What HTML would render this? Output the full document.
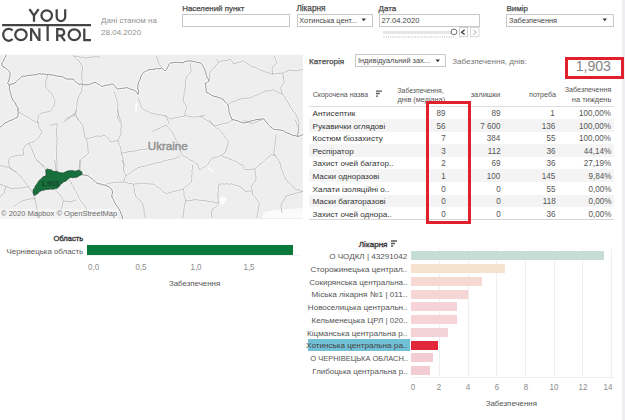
<!DOCTYPE html><html><head><meta charset="utf-8"><style>
html,body{margin:0;padding:0;background:#fff;width:625px;height:420px;overflow:hidden;}
body{position:relative;font-family:"Liberation Sans",sans-serif;}
.t{position:absolute;white-space:nowrap;}
.r{position:absolute;}
svg{position:absolute;}
</style></head><body>
<div class="r" style="left:622.00px;top:0.00px;width:3.00px;height:420.00px;background:#eeeef3;"></div>
<svg style="left:0;top:0" width="100" height="50" viewBox="0 0 100 50">
<g fill="none" stroke="#444446" stroke-width="2.25" stroke-linecap="butt" stroke-linejoin="miter">
<path d="M29.4 9.1 L34 15.6 L38.6 9.1 M34 15.6 V21.7" stroke-linejoin="bevel"/>
<circle cx="46.7" cy="15.5" r="5.25"/>
<path d="M56.7 9.3 V16.8 A4.25 4.25 0 0 0 65.2 16.8 V9.3"/>
<path d="M2.1 25 H91"/>
<path d="M12.6 30.6 A5.5 6 0 1 0 12.6 39"/>
<ellipse cx="20.95" cy="34.7" rx="5.7" ry="5.4"/>
</g><g fill="#444446"><rect x="30" y="28.3" width="2.2" height="12.7"/><rect x="38.3" y="28.3" width="2.2" height="12.7"/><path d="M30 28.3 H32.5 L40.5 41 H38Z"/></g><g fill="none" stroke="#444446" stroke-width="2.25">
<path d="M47.65 25 V41"/>
<path d="M57.2 41 V29.2 H61 A3.2 3.2 0 0 1 61 35.6 H57.2 M60.6 35.6 L65 41"/>
<ellipse cx="74.3" cy="34.7" rx="5.7" ry="5.4"/>
<path d="M84.3 28.5 V40.05 H91"/>
</g></svg>
<div class="t" style="top:17.00px;font-size:8px;line-height:8px;color:#8f8f8f;left:101.10px;">Дані станом на</div>
<div class="t" style="top:29.00px;font-size:8px;line-height:8px;color:#8f8f8f;left:101.10px;">28.04.2020</div>
<div class="t" style="top:5.00px;font-size:7.9px;line-height:7.9px;color:#4a4a4a;left:182.20px;-webkit-text-stroke:0.25px #4a4a4a;">Населений пункт</div>
<div class="r" style="left:182.00px;top:14.00px;width:108.00px;height:12.60px;background:#fff;border:1px solid #c8c8c8;box-sizing:border-box;"></div>
<div class="t" style="top:5.00px;font-size:8.2px;line-height:8.2px;color:#4a4a4a;left:296.40px;-webkit-text-stroke:0.25px #4a4a4a;">Лікарня</div>
<div class="r" style="left:297.00px;top:14.00px;width:76.00px;height:12.60px;background:#fff;border:1px solid #c8c8c8;box-sizing:border-box;"></div>
<div class="t" style="top:17.00px;font-size:7.3px;line-height:7.3px;color:#444;left:299.30px;">Хотинська цент...</div>
<svg style="left:361px;top:18px" width="6" height="4"><path d="M0.5 0.5 H5 L2.75 3.2Z" fill="#333"/></svg>
<div class="t" style="top:5.00px;font-size:8px;line-height:8px;color:#4a4a4a;left:378.60px;-webkit-text-stroke:0.25px #4a4a4a;">Дата</div>
<div class="r" style="left:379.00px;top:14.00px;width:101.00px;height:12.60px;background:#fff;border:1px solid #c8c8c8;box-sizing:border-box;"></div>
<div class="t" style="top:17.00px;font-size:7.6px;line-height:7.6px;color:#444;left:381.50px;">27.04.2020</div>
<div class="r" style="left:383.00px;top:30.50px;width:69.00px;height:3.50px;background:#e6e6e6;"></div>
<svg style="left:380px;top:35px" width="78" height="4"><path d="M3.5 2 H75" stroke="#d6d6d6" stroke-width="2" stroke-dasharray="0.9 1.35"/></svg>
<svg style="left:449px;top:26px" width="31" height="12"><circle cx="5" cy="5.9" r="2.9" fill="#fff" stroke="#6a6a6a" stroke-width="0.95"/><rect x="10.6" y="1.5" width="8" height="9.2" fill="#fff" stroke="#c4c4c4" stroke-width="0.8"/><path d="M15.6 3.8 L12.6 6.2 L15.6 8.6" fill="none" stroke="#3a3a3a" stroke-width="1.3"/><rect x="21.4" y="1.5" width="8.6" height="9.2" fill="#fff" stroke="#d0d0d0" stroke-width="0.8"/><path d="M24.4 3.8 L27.2 6.2 L24.4 8.6" fill="none" stroke="#c0c0c0" stroke-width="1.1"/></svg>
<div class="t" style="top:5.00px;font-size:8px;line-height:8px;color:#4a4a4a;left:506.40px;-webkit-text-stroke:0.25px #4a4a4a;">Вимір</div>
<div class="r" style="left:506.00px;top:14.00px;width:108.00px;height:12.60px;background:#fff;border:1px solid #c8c8c8;box-sizing:border-box;"></div>
<div class="t" style="top:17.00px;font-size:7.4px;line-height:7.4px;color:#444;left:509.00px;">Забезпечення</div>
<svg style="left:602px;top:18px" width="6" height="4"><path d="M0.5 0.5 H5 L2.75 3.2Z" fill="#333"/></svg>
<svg style="left:0;top:0" width="304" height="220" viewBox="0 0 304 220"><defs><clipPath id="mc"><rect x="0" y="54.7" width="303" height="164.3"/></clipPath></defs><rect x="0" y="54.7" width="303" height="164.3" fill="#eeeeee"/><g clip-path="url(#mc)"><path d="M219 198 L224 196 L227 199 L224 204 L218 205Z" fill="#fbfbfb"/><path d="M264 212 L275 210 L290 209 L300 208 L303 209 L303 218 L262 218Z" fill="#fbfbfb"/><path d="M136 101 L137.5 104 L137 111 L135.5 112 L135 106Z" fill="#fbfbfb"/><path d="M207.5 168 L209.5 167.6 L213.5 171.5 L212.5 173 Z" fill="#fbfbfb"/><g fill="none" stroke-linejoin="round"><path d="M6.7 54.0 L6.0 55.7 L5.3 57.5 L4.1 58.9 L3.7 60.8 L2.5 62.3 L1.7 64.0 L2.5 66.5 L4.0 67.2 L5.5 67.8 L6.7 69.0 L8.3 70.7 L10.0 72.3 L10.2 74.0 L9.7 75.7 L9.8 77.4 L9.2 79.0 L8.7 81.1 L7.5 83.0 L9.2 85.0 L9.5 86.8 L9.3 88.7 L10.1 90.4 L10.0 92.3 L10.9 93.9 L11.2 95.7 L11.6 97.5 L12.6 99.0 L13.3 100.7 L14.6 102.3 L15.8 104.0 L16.2 105.9 L17.8 107.2 L18.3 109.0 L17.8 110.6 L18.2 112.3 L18.1 114.0 L18.0 115.7 L17.5 117.3 L16.1 118.1 L14.4 118.4 L13.1 119.6 L11.5 120.0 L10.0 120.7 L8.3 121.4 L6.7 122.3 L5.0 123.0 L3.7 124.0 L2.7 125.3 L1.5 126.3 L0.0 127.0" stroke="#ffffff" stroke-opacity="0.75" stroke-width="2.8"/><path d="M9.2 85.0 L11.0 84.1 L13.1 83.8 L15.0 83.0 L16.3 81.7 L17.6 80.3 L19.1 79.2 L20.3 77.8 L21.7 76.5 L23.3 76.1 L25.1 76.3 L26.7 75.9 L28.3 75.3 L30.0 75.4 L31.6 75.1 L33.3 74.8 L35.0 74.9 L36.7 74.5 L38.3 73.8 L40.0 73.7 L41.6 74.3 L43.4 73.7 L45.0 74.2 L46.6 74.7 L48.4 74.3 L50.0 74.8 L51.7 75.0 L53.4 74.9 L55.0 75.7 L56.7 76.0 L58.3 76.1 L60.0 76.6 L61.7 76.5 L63.4 77.2 L65.0 78.3 L66.7 79.0 L68.3 79.1 L70.0 79.1 L71.7 79.0 L73.3 79.0 L74.3 80.5 L75.5 81.8 L77.1 82.7 L78.3 84.0 L80.0 84.3 L81.7 83.9 L83.3 84.7 L85.0 84.8 L86.7 84.8 L88.5 84.8 L90.1 84.2 L91.6 83.3 L93.3 83.0 L95.0 82.2 L96.5 83.0 L97.7 84.1 L99.4 84.5 L100.6 85.7 L102.0 86.6 L103.7 85.9 L105.5 85.4 L107.2 84.9 L109.1 85.1 L110.8 84.1 L112.6 84.0 L114.1 85.1 L115.3 86.5 L116.3 88.1 L117.9 89.2 L119.6 88.5 L121.4 88.4 L123.2 88.2 L125.0 88.1 L126.7 87.4 L128.4 88.4 L130.1 89.1 L132.1 89.4 L133.8 90.2 L135.5 91.0 L136.9 92.7 L138.1 94.5 L138.4 92.8 L138.5 91.0 L137.8 89.2 L137.8 87.5 L137.9 85.8 L138.1 84.0 L138.5 82.4 L139.3 81.0 L140.1 79.5 L140.4 77.9 L140.8 76.3 L141.8 74.9 L142.5 73.4 L143.8 72.4 L145.2 71.6 L146.7 71.0 L147.8 69.8 L149.6 69.8 L151.3 69.4 L153.1 69.3 L154.9 69.1 L156.6 68.3 L158.4 68.9 L160.2 68.6 L161.9 68.1 L163.4 69.7 L165.4 70.7 L166.7 69.3 L167.4 67.5 L168.5 65.9 L169.3 64.2 L170.7 62.8 L172.5 62.9 L174.2 62.4 L176.0 62.4 L177.7 62.5 L179.5 62.5 L181.2 62.7 L183.0 62.8 L184.6 61.8 L186.4 61.2 L188.3 61.0 L190.1 60.9 L191.9 61.2 L193.6 61.6 L195.4 61.6 L197.0 62.6 L198.8 62.6 L200.6 62.8 L202.0 64.4 L203.1 66.2 L204.0 68.1 L204.7 69.6 L205.2 71.1 L205.9 72.6 L205.9 74.4 L206.7 75.8 L207.1 77.7 L208.4 79.2 L209.2 80.9 L207.8 81.7 L206.6 82.9 L205.0 83.4 L205.7 85.2 L205.8 87.1 L206.2 88.9 L206.1 90.9 L206.7 92.7 L208.5 93.3 L210.2 94.0 L211.5 95.5 L213.4 96.0 L215.1 96.6 L216.9 96.8 L218.4 97.7 L220.3 97.9 L221.8 98.9 L223.5 99.4 L224.2 100.9 L225.3 102.1 L226.5 103.3 L227.7 104.4 L228.3 106.0 L228.5 107.7 L229.0 109.4 L228.8 111.2 L229.4 112.8 L230.0 114.5 L230.4 116.2 L231.4 117.8 L231.9 119.5 L233.6 119.6 L235.3 120.4 L237.0 120.4 L238.5 121.4 L240.2 121.9 L241.9 122.5 L243.7 122.9 L245.4 122.8 L247.1 122.3 L248.7 121.4 L250.4 121.2 L252.1 120.9 L253.8 120.4 L255.4 119.8 L257.1 119.5 L258.8 119.4 L260.5 119.1 L262.2 119.2 L263.9 118.7 L264.7 120.4 L266.1 121.5 L267.2 122.9 L268.2 124.5 L269.5 125.9 L270.9 127.1 L272.6 128.1 L273.8 129.5 L275.7 129.5 L277.6 129.7 L279.5 129.9 L281.4 130.2 L283.3 130.7 L284.7 131.5 L286.0 132.5 L287.5 133.1 L289.1 133.6 L290.5 134.3 L292.2 135.0 L294.0 135.8 L295.9 135.7 L297.6 136.7 L299.5 136.0 L301.3 135.4 L303.0 134.3" stroke="#ffffff" stroke-opacity="0.75" stroke-width="2.8"/><path d="M81.4 174.3 L83.0 174.9 L84.6 175.2 L86.3 175.3 L87.9 175.7 L89.5 176.5 L90.6 178.1 L92.3 178.8 L93.6 180.0 L94.9 181.4 L96.2 182.7 L97.9 183.6 L99.7 183.9 L101.5 184.2 L103.1 185.0 L105.0 185.0 L107.1 186.2 L109.3 187.1 L110.9 188.3 L112.1 190.0 L112.4 191.8 L112.4 193.6 L111.7 195.3 L112.1 197.1 L112.6 198.7 L113.8 199.9 L114.0 201.6 L115.0 202.9 L115.6 204.5 L116.8 205.8 L117.9 207.1 L118.7 208.5 L119.3 210.0 L120.3 211.3 L120.7 212.9 L121.8 214.9 L122.1 217.1 L123.0 220.0" stroke="#ffffff" stroke-opacity="0.75" stroke-width="2.8"/><path d="M48.3 74.8 L47.3 76.3 L46.9 78.1 L46.4 79.8 L45.8 81.5 L45.5 83.4 L45.9 85.4 L45.8 87.3 L46.8 88.8 L48.0 90.2 L49.5 91.2 L50.7 92.5 L51.7 94.0 L52.7 95.6 L53.5 97.3 L54.1 99.1 L55.0 100.7 L54.8 102.4 L54.2 104.0 L54.0 105.7 L53.3 107.3 L51.9 108.5 L51.2 110.2 L50.0 111.5 L48.3 111.8 L46.7 112.0 L45.0 112.1 L43.4 112.8 L41.7 113.0 L39.8 114.1 L38.3 115.7 L38.1 117.5 L37.9 119.3 L37.7 121.2 L37.5 123.0" stroke="#ffffff" stroke-opacity="0.7" stroke-width="2"/><path d="M16.7 109.0 L18.1 110.1 L18.9 111.6 L20.0 113.0 L21.8 113.7 L23.5 114.4 L24.9 115.8 L26.7 116.5 L28.5 117.3 L30.0 118.6 L31.6 119.8 L33.3 120.7 L34.9 121.5 L36.7 122.1 L38.3 123.0" stroke="#ffffff" stroke-opacity="0.7" stroke-width="2"/><path d="M73.3 55.7 L74.6 57.0 L75.9 58.4 L77.2 59.8 L78.9 60.8 L80.0 62.3 L80.8 64.0 L81.8 65.5 L82.5 67.3 L82.5 69.0 L82.0 70.6 L82.0 72.3 L81.8 74.0 L81.7 75.7 L81.7 77.4 L81.7 79.1 L82.2 80.7 L82.3 82.3 L82.5 84.0 L82.3 85.7 L82.1 87.3 L81.7 89.0 L81.7 90.7 L80.9 92.4 L80.0 94.0 L79.2 95.7 L78.3 97.3 L77.7 98.9 L77.6 100.6 L77.2 102.3 L76.9 103.9 L77.2 105.7 L76.7 107.3 L76.4 109.0 L75.9 110.6 L75.8 112.3 L75.8 114.0 L74.5 115.1 L73.0 115.9 L71.5 116.5 L70.0 117.3 L68.9 118.6 L67.4 119.5 L66.2 120.6 L64.6 121.2 L63.3 122.3" stroke="#ffffff" stroke-opacity="0.7" stroke-width="2"/><path d="M75.8 114.0 L76.2 115.8 L76.8 117.5 L77.9 118.9 L78.3 120.7" stroke="#ffffff" stroke-opacity="0.7" stroke-width="2"/><path d="M73.3 55.7 L74.9 56.2 L76.6 56.4 L78.4 56.3 L79.9 57.2 L81.6 57.5 L83.4 57.2 L85.0 58.1 L86.7 58.0 L88.3 57.5 L90.0 57.2 L91.7 57.3 L93.3 56.5 L94.9 57.0 L96.7 56.6 L98.3 57.0 L100.0 57.3" stroke="#ffffff" stroke-opacity="0.7" stroke-width="2"/><path d="M156.6 55.8 L157.0 57.6 L157.6 59.3 L158.2 61.0 L158.4 62.8 L159.7 64.5 L160.6 66.4 L161.9 68.1" stroke="#ffffff" stroke-opacity="0.7" stroke-width="2"/><path d="M190.0 62.8 L190.6 64.5 L190.4 66.3 L190.6 68.1 L191.2 69.8 L191.0 71.6 L190.0 73.0 L188.7 74.2 L187.6 75.6 L186.5 76.9 L186.6 78.7 L185.6 80.4 L185.5 82.1 L185.2 83.9 L185.6 85.7 L185.2 87.5 L184.8 89.2 L184.9 91.0 L184.0 92.7 L184.1 94.5 L183.9 96.3 L183.4 98.0 L183.0 99.8 L183.6 101.7 L184.5 103.4 L185.8 105.0 L186.5 106.8 L186.4 108.6 L185.5 110.3 L185.4 112.1 L185.0 113.8 L184.8 115.6 L183.3 116.3 L181.8 116.7 L180.1 116.6 L178.5 117.2 L177.0 117.9 L175.3 117.6 L173.8 118.2 L172.2 118.5 L170.7 119.1 L168.7 118.2 L167.3 116.5 L165.4 115.6 L163.6 115.7 L161.9 114.8 L160.1 114.9 L158.4 114.8 L156.6 114.3 L154.9 113.8 L153.1 113.9 L151.5 113.3 L149.9 112.7 L148.6 111.6 L146.9 111.1 L145.4 110.4 L143.9 109.6 L142.5 108.6 L141.5 107.2 L141.0 105.7 L140.5 104.1 L139.8 102.6 L139.5 100.9 L138.6 99.6 L138.1 98.0" stroke="#ffffff" stroke-opacity="0.7" stroke-width="2"/><path d="M184.8 115.6 L186.6 116.0 L188.4 116.1 L190.1 116.6 L191.9 116.7 L193.6 117.4 L195.2 116.9 L196.8 116.5 L198.5 116.8 L200.1 116.4 L201.7 115.9 L203.4 115.8 L205.0 115.6" stroke="#ffffff" stroke-opacity="0.7" stroke-width="2"/><path d="M114.4 91.9 L114.6 93.6 L115.7 95.1 L115.7 96.9 L116.5 98.4 L116.9 100.0 L117.1 101.7 L117.9 103.3 L118.0 105.1 L117.9 106.8 L117.7 108.6 L117.5 110.3 L117.9 112.1 L118.6 113.8 L118.8 115.7 L119.5 117.5 L120.1 119.2 L120.9 120.9 L121.4 122.7" stroke="#ffffff" stroke-opacity="0.7" stroke-width="2"/><path d="M165.4 115.6 L166.2 117.2 L167.2 118.8 L167.8 120.5 L168.6 122.2 L169.0 124.0" stroke="#ffffff" stroke-opacity="0.7" stroke-width="2"/><path d="M216.8 59.0 L217.5 60.8 L218.5 62.4 L220.1 61.7 L221.8 61.2 L223.5 60.6 L225.3 60.7 L227.0 60.3 L228.7 59.6 L230.3 59.0 L231.5 60.6 L232.7 62.2 L233.6 64.0 L235.2 63.3 L237.0 62.9 L238.6 62.1 L240.3 61.8 L242.0 61.1 L243.7 60.7 L244.8 62.0 L246.2 63.0 L247.7 63.8 L249.2 64.6 L250.4 65.8 L251.8 66.8 L253.5 66.9 L254.9 67.6 L256.6 68.0 L257.9 68.9 L259.4 69.6 L260.9 70.3 L262.5 70.7 L263.9 71.6 L265.6 72.1 L267.4 72.3 L269.0 73.0 L270.7 73.4 L272.3 74.2 L274.0 74.0 L275.6 73.5 L277.3 73.4 L279.0 73.4 L280.7 73.2 L282.4 73.3 L284.1 72.5 L285.7 71.7 L287.4 71.0 L289.0 70.0 L290.7 70.3 L292.4 70.5 L294.1 70.8 L295.8 70.6 L297.5 70.8 L299.3 70.1 L301.3 70.0 L303.0 69.1" stroke="#ffffff" stroke-opacity="0.7" stroke-width="2"/><path d="M218.5 62.4 L217.7 63.8 L216.2 64.8 L215.2 66.1 L214.5 67.7 L213.0 68.5 L211.9 69.8 L211.0 71.2 L210.0 72.5 L209.7 74.2 L209.4 75.8 L209.8 77.6 L209.3 79.2 L209.2 80.9" stroke="#ffffff" stroke-opacity="0.7" stroke-width="2"/><path d="M274.0 55.7 L274.8 57.4 L275.4 59.2 L276.3 60.8 L277.3 62.4 L275.9 63.5 L274.8 64.9 L273.3 65.9 L272.3 67.4 L272.2 69.1 L272.1 70.8 L272.5 72.5 L272.3 74.2" stroke="#ffffff" stroke-opacity="0.7" stroke-width="2"/><path d="M282.4 73.3 L283.1 75.1 L283.3 77.0 L283.5 78.9 L284.0 80.7 L284.0 82.6 L282.7 84.1 L281.8 85.9 L280.7 87.6 L281.0 89.3 L281.5 91.0 L281.8 92.7 L282.4 94.3 L283.4 95.6 L284.7 96.7 L285.2 98.5 L286.2 99.8 L287.4 101.0 L288.2 102.7 L289.1 104.4 L289.8 106.2 L290.8 107.8 L292.1 108.9 L292.6 110.6 L294.0 111.7 L295.1 113.0 L295.8 114.5 L296.7 116.1 L297.0 117.9 L298.1 119.5 L298.3 121.3 L299.2 122.9 L298.6 124.6 L298.8 126.4 L298.7 128.1 L298.4 129.8 L298.1 131.5 L297.8 133.2 L297.7 135.0 L297.6 136.7" stroke="#ffffff" stroke-opacity="0.7" stroke-width="2"/><path d="M227.7 104.4 L229.3 103.8 L230.7 102.7 L232.3 102.0 L233.9 101.4 L235.6 101.0 L237.1 100.0 L238.7 99.4 L240.4 99.2 L242.0 98.5 L243.7 98.3 L245.4 98.2 L247.1 98.3 L248.8 98.1 L250.4 97.7 L252.1 97.2 L253.7 96.2 L255.4 95.7 L257.1 95.0 L258.8 94.3 L260.5 93.5 L262.0 92.4 L264.0 92.1 L265.5 91.0 L267.2 90.6 L268.9 91.0 L270.6 90.8 L272.3 89.9 L274.0 90.1 L275.7 90.9 L277.2 92.0 L278.9 93.0 L280.7 93.4 L282.4 94.3" stroke="#ffffff" stroke-opacity="0.7" stroke-width="2"/><path d="M200.0 116.2 L201.5 116.9 L202.9 117.7 L204.0 119.0 L205.7 119.3 L207.0 120.4 L208.4 121.2 L210.1 122.2 L211.3 123.6 L212.6 125.1 L214.3 126.0" stroke="#ffffff" stroke-opacity="0.7" stroke-width="2"/><path d="M37.9 122.1 L38.5 124.2 L38.6 126.4 L39.3 128.0 L40.3 129.3 L41.0 130.8 L42.1 132.1 L41.1 133.5 L40.5 135.1 L39.2 136.3 L38.6 137.9 L37.2 139.0 L36.0 140.3 L34.6 141.4 L32.9 142.1 L31.2 142.6 L29.6 143.1 L27.9 143.6 L26.5 144.8 L25.0 145.7 L24.2 147.6 L22.9 149.3 L23.3 151.2 L23.5 153.1 L23.6 155.0 L21.9 154.9 L20.4 155.7 L18.7 155.3 L17.1 155.7 L15.2 155.7 L13.3 156.5 L11.4 156.4 L10.2 157.6 L9.4 159.2 L8.6 160.7 L8.5 162.6 L9.2 164.5 L9.3 166.4 L10.4 167.8 L11.4 169.3 L12.9 170.1 L14.1 171.4 L15.7 172.0" stroke="#ffffff" stroke-opacity="0.7" stroke-width="2"/><path d="M27.9 143.6 L30.0 145.0 L30.7 146.8 L31.6 148.5 L32.2 150.3 L32.9 152.1 L33.8 154.0 L34.6 155.8 L35.0 157.9 L36.4 159.1 L37.2 160.9 L38.6 162.1 L40.1 162.9 L41.3 164.3 L42.9 165.0 L44.4 166.3 L45.8 167.7 L47.1 169.3" stroke="#ffffff" stroke-opacity="0.7" stroke-width="2"/><path d="M0.0 165.7 L1.7 166.0 L3.5 166.0 L5.2 166.4 L6.8 167.2 L8.6 167.1 L9.9 168.2 L11.3 169.0 L12.8 169.8 L14.1 170.8 L15.7 171.4 L16.6 172.8 L18.0 173.7 L19.0 174.9 L20.5 175.7 L21.4 177.1 L22.3 178.7 L23.6 180.0 L24.5 181.6 L25.7 182.9 L26.6 184.4 L27.8 185.6 L28.6 187.1 L30.0 188.3 L30.5 190.2 L32.1 191.3 L32.9 192.9" stroke="#ffffff" stroke-opacity="0.7" stroke-width="2"/><path d="M0.0 184.3 L1.9 185.0 L3.8 185.6 L5.7 186.4 L7.7 187.0 L9.4 188.0 L11.4 188.6 L13.1 188.9 L14.7 188.2 L16.4 188.4 L18.1 188.0 L19.7 188.1 L21.4 187.9 L23.2 187.6 L25.0 187.2 L26.8 187.0 L28.6 187.1" stroke="#ffffff" stroke-opacity="0.7" stroke-width="2"/><path d="M5.7 186.4 L5.6 188.1 L4.7 189.6 L4.7 191.3 L4.3 192.9 L3.0 194.4 L1.2 195.4 L0.0 197.0" stroke="#ffffff" stroke-opacity="0.7" stroke-width="2"/><path d="M14.3 205.7 L15.9 205.2 L17.1 203.9 L18.4 202.9 L19.9 202.0 L21.4 201.4 L23.1 200.6 L25.0 200.2 L26.7 199.5 L28.6 199.3 L30.4 198.9 L32.1 198.8 L33.9 198.8 L35.7 198.6" stroke="#ffffff" stroke-opacity="0.7" stroke-width="2"/><path d="M33.6 194.3 L33.7 196.1 L34.2 197.8 L34.9 199.4 L35.3 201.2 L35.7 202.9 L36.1 204.8 L36.7 206.7 L37.1 208.6 L37.3 210.5 L37.6 212.3 L37.5 214.2 L37.0 216.1 L37.5 218.0" stroke="#ffffff" stroke-opacity="0.7" stroke-width="2"/><path d="M37.1 160.0 L38.7 161.2 L40.0 162.9 L41.4 164.3 L42.3 165.8 L43.1 167.3 L44.3 168.6 L46.1 170.0" stroke="#ffffff" stroke-opacity="0.7" stroke-width="2"/><path d="M54.3 160.0 L54.9 161.7 L55.2 163.5 L55.5 165.3 L55.7 167.1 L55.9 168.7 L55.9 170.4 L56.0 172.0" stroke="#ffffff" stroke-opacity="0.7" stroke-width="2"/><path d="M50.0 125.0 L51.8 125.0 L53.6 124.6 L55.4 124.2 L57.1 123.6 L57.2 125.5 L57.0 127.4 L56.4 129.3 L56.3 131.1 L56.3 132.9 L56.7 134.7 L56.7 136.5 L57.2 138.2 L57.0 140.0 L56.7 141.8 L57.1 143.6 L56.7 145.2 L56.6 146.8 L56.4 148.5 L56.9 150.1 L56.9 151.8 L56.8 153.4 L56.4 155.0 L56.6 156.8 L56.6 158.6 L56.6 160.4 L57.1 162.1 L56.9 163.8 L57.0 165.4 L57.1 167.1 L57.0 168.8 L57.4 170.4 L57.5 172.0" stroke="#ffffff" stroke-opacity="0.7" stroke-width="2"/><path d="M69.3 180.0 L70.1 181.4 L71.3 182.6 L71.7 184.4 L72.9 185.6 L73.6 187.1 L74.0 188.7 L74.9 190.1 L75.8 191.4 L76.4 192.9 L77.6 194.7 L78.5 196.6 L79.3 198.6 L80.3 200.1 L81.3 201.5 L82.8 202.7 L83.6 204.3 L84.8 205.5 L85.5 207.2 L86.4 208.6 L87.1 210.3 L88.0 212.0" stroke="#ffffff" stroke-opacity="0.7" stroke-width="2"/><path d="M55.0 190.0 L56.2 191.1 L57.4 192.1 L58.4 193.5 L59.8 194.3 L60.7 195.7 L61.8 197.5 L62.7 199.5 L63.6 201.4 L62.7 203.2 L62.5 205.2 L62.1 207.1 L61.4 208.7 L61.4 210.4 L61.0 212.0" stroke="#ffffff" stroke-opacity="0.7" stroke-width="2"/><path d="M63.6 201.4 L65.3 201.2 L67.0 201.2 L68.7 201.8 L70.4 201.6 L72.1 201.4 L74.2 200.6 L76.4 200.0" stroke="#ffffff" stroke-opacity="0.7" stroke-width="2"/><path d="M79.3 160.0 L79.8 161.6 L79.5 163.3 L79.5 165.0 L79.8 166.7 L80.1 168.3 L80.0 170.0" stroke="#ffffff" stroke-opacity="0.7" stroke-width="2"/><path d="M122.0 160.0 L122.6 161.5 L123.2 163.0 L124.4 164.2 L125.0 165.7" stroke="#ffffff" stroke-opacity="0.7" stroke-width="2"/><path d="M65.0 120.0 L66.2 118.7 L67.8 118.0 L69.3 117.1 L70.8 116.3 L72.0 115.0 L73.6 114.3 L75.0 113.0 L76.1 111.6 L77.1 110.0" stroke="#ffffff" stroke-opacity="0.7" stroke-width="2"/><path d="M73.6 114.3 L75.0 115.7 L76.6 117.0 L77.9 118.6 L78.6 120.2 L80.1 121.4 L80.8 123.0 L82.1 124.3 L82.8 126.1 L83.3 128.0 L83.6 130.0 L83.7 131.8 L84.5 133.5 L84.3 135.4 L85.0 137.1 L85.7 138.5 L86.4 140.0 L87.0 141.7 L87.4 143.5 L87.6 145.3 L87.9 147.1 L88.0 149.0 L88.0 151.0 L88.6 152.9 L87.5 154.2 L86.2 155.1 L85.0 156.2 L83.6 157.1 L81.9 158.3 L80.7 160.0 L80.8 161.7 L80.6 163.4 L80.3 165.0 L79.9 166.7 L79.2 168.3 L79.3 170.0" stroke="#ffffff" stroke-opacity="0.7" stroke-width="2"/><path d="M86.4 138.6 L88.2 138.5 L89.9 137.9 L91.7 137.7 L93.4 137.2 L95.0 136.4 L96.7 136.1 L98.3 135.9 L100.0 136.4 L101.7 136.1 L103.3 135.4 L105.0 135.7 L106.7 137.3 L108.6 138.6 L109.7 140.3 L110.7 142.1 L112.5 141.7 L114.3 141.3 L116.0 140.8 L117.9 140.7" stroke="#ffffff" stroke-opacity="0.7" stroke-width="2"/><path d="M117.9 110.0 L118.3 111.7 L118.1 113.4 L118.0 115.2 L117.5 116.9 L117.9 118.6 L119.0 119.9 L119.3 121.6 L120.7 122.8 L121.4 124.3 L121.4 126.0 L120.9 127.6 L120.8 129.3 L121.0 131.0 L121.2 132.7 L120.7 134.3 L120.0 135.9 L119.4 137.5 L118.3 139.0 L117.9 140.7 L118.7 142.2 L119.1 143.8 L119.3 145.5 L120.5 146.9 L120.7 148.6 L121.1 150.4 L121.2 152.2 L121.5 154.0 L122.1 155.7 L122.8 157.4 L123.1 159.1 L123.3 160.8 L123.0 162.6 L123.6 164.3 L123.8 166.2 L123.4 168.1 L123.6 170.0 L123.9 171.6 L124.9 173.0 L125.6 174.4 L126.0 176.0 L124.9 177.8 L124.3 179.9 L123.6 181.9" stroke="#ffffff" stroke-opacity="0.7" stroke-width="2"/><path d="M121.2 153.3 L122.9 152.8 L124.6 152.8 L126.3 152.2 L128.0 151.8 L129.6 151.3 L131.4 151.5 L133.1 151.0 L134.7 151.1 L136.3 150.6 L137.9 150.5 L139.4 149.6 L141.0 149.5 L142.6 149.4 L144.3 149.5 L145.9 149.2 L147.4 148.6" stroke="#ffffff" stroke-opacity="0.7" stroke-width="2"/><path d="M152.1 131.9 L153.6 131.0 L155.2 130.1 L156.8 129.5 L158.5 128.7 L160.2 128.3 L161.5 126.9 L163.3 126.6 L164.9 125.8 L166.4 124.8 L167.2 126.3 L168.3 127.6 L169.4 128.9 L170.6 130.1 L171.7 131.5 L172.7 132.9 L173.6 134.3 L174.0 135.9 L175.2 137.2 L175.8 138.8 L176.0 140.5 L177.0 141.8 L177.8 143.3 L178.5 144.8 L178.7 146.5 L179.5 147.9 L179.7 149.6 L180.7 151.0 L181.2 152.7 L182.0 154.3 L183.1 155.7 L184.6 156.4 L186.1 157.1 L187.6 157.9 L188.8 159.0 L190.2 160.0 L191.7 160.6 L193.2 161.3 L194.6 162.3 L195.9 163.3 L197.4 164.0 L197.9 165.6 L198.4 167.1 L198.9 168.6 L199.8 170.0 L201.3 169.1 L202.6 167.8 L204.3 167.3 L205.5 166.0 L207.1 165.2" stroke="#ffffff" stroke-opacity="0.7" stroke-width="2"/><path d="M126.0 176.0 L127.4 175.1 L128.6 174.1 L130.1 173.4 L131.2 172.1 L132.5 171.2 L133.8 170.2 L135.1 169.2 L136.8 168.8 L137.9 167.6 L139.5 167.3 L141.0 166.7 L142.6 166.3 L144.3 166.4 L145.8 165.6 L147.3 165.0 L149.0 165.0 L150.6 164.5 L152.1 164.0 L153.8 164.0 L155.2 162.9 L156.9 162.8 L158.5 162.7 L160.1 162.3 L161.7 162.0 L163.1 160.9 L164.8 160.7 L166.4 160.5 L167.9 159.8 L169.5 159.5 L171.3 159.7 L172.8 159.0 L174.5 158.8 L176.0 158.1 L177.5 157.2 L179.3 156.8 L180.7 155.7" stroke="#ffffff" stroke-opacity="0.7" stroke-width="2"/><path d="M192.6 165.2 L192.5 166.9 L192.6 168.6 L192.0 170.2 L191.8 171.9 L192.3 173.6 L191.8 175.2 L191.7 176.9 L191.9 178.6 L191.6 180.2 L191.4 181.9 L190.2 183.3 L188.8 184.4 L187.4 185.6 L185.8 186.6 L184.4 187.7 L183.1 189.0 L181.6 189.6 L180.0 190.2 L178.4 190.3 L176.7 190.5 L175.2 191.2 L173.6 191.4 L171.8 192.1 L170.1 192.8 L168.1 193.0 L166.4 193.8 L165.1 192.7 L163.5 192.0 L162.2 190.9 L161.1 189.6 L159.8 188.5 L158.5 187.4 L156.9 186.7 L155.7 185.6 L154.5 184.3 L152.8 184.0 L151.1 184.0 L149.4 184.0 L147.7 183.8 L146.0 183.1 L144.3 183.4 L142.6 183.1 L140.7 183.3 L138.8 183.7 L136.9 183.9 L135.0 183.8 L133.1 184.3 L131.6 183.5 L129.9 183.6 L128.3 183.3 L126.8 182.5 L125.1 182.5 L123.6 181.9 L121.8 182.4 L120.0 181.9 L118.2 182.4 L116.4 182.2 L114.7 182.7 L112.8 182.5 L111.1 183.0 L109.3 183.1 L106.4 184.3" stroke="#ffffff" stroke-opacity="0.7" stroke-width="2"/><path d="M133.1 184.3 L133.7 185.9 L134.2 187.6 L134.1 189.4 L134.4 191.1 L134.5 192.9 L135.5 194.4 L135.5 196.2 L136.6 197.5 L137.9 198.5 L139.0 199.8 L140.4 200.7 L141.5 202.0 L142.6 203.3 L142.9 205.0 L143.0 206.8 L143.9 208.3 L144.0 210.1 L144.1 211.8 L144.3 213.6 L145.0 215.2 L145.0 218.0" stroke="#ffffff" stroke-opacity="0.7" stroke-width="2"/><path d="M183.1 189.0 L183.7 190.7 L184.1 192.4 L183.8 194.2 L184.1 195.9 L184.8 197.6 L185.5 199.2 L185.5 201.0 L184.9 202.5 L185.1 204.2 L184.4 205.7 L184.3 207.3 L183.9 208.8 L184.2 210.5 L183.4 212.0 L183.6 213.7 L183.1 215.2 L183.0 218.0" stroke="#ffffff" stroke-opacity="0.7" stroke-width="2"/><path d="M185.5 201.0 L187.4 200.7 L189.3 200.8 L191.2 200.5 L193.1 199.8 L195.0 199.8 L196.8 199.7 L198.5 200.1 L200.2 200.3 L201.9 200.4 L203.7 200.4 L205.4 200.6 L207.1 201.0 L208.8 201.5 L210.4 202.0 L212.3 201.6 L213.9 202.4 L215.6 202.8 L217.4 202.6 L219.0 203.3" stroke="#ffffff" stroke-opacity="0.7" stroke-width="2"/><path d="M209.5 120.0 L210.5 121.7 L212.1 122.8 L213.0 124.5 L214.3 126.0 L215.9 125.6 L217.5 125.3 L219.0 124.6 L220.6 124.3 L222.3 124.1 L223.8 123.5 L225.5 123.3 L227.0 122.8 L228.6 122.4 L230.1 121.6 L231.6 120.5 L233.3 120.0" stroke="#ffffff" stroke-opacity="0.7" stroke-width="2"/><path d="M242.9 120.0 L244.4 120.7 L246.1 121.2 L247.7 121.6 L249.2 122.6 L250.7 123.2 L252.4 123.6 L254.0 123.0 L255.5 122.2 L257.1 121.8 L258.6 120.9 L260.2 120.3 L261.9 120.0" stroke="#ffffff" stroke-opacity="0.7" stroke-width="2"/><path d="M295.2 120.0 L295.9 121.6 L296.7 123.1 L297.0 124.7 L297.6 126.3 L298.5 127.8 L298.8 129.5 L298.4 131.3 L298.5 133.2 L297.7 134.9 L297.6 136.7" stroke="#ffffff" stroke-opacity="0.7" stroke-width="2"/><path d="M214.3 126.0 L215.6 127.4 L217.1 128.4 L218.8 129.3 L220.0 130.7 L221.4 131.9 L222.5 133.2 L223.2 134.8 L224.7 135.8 L225.3 137.5 L226.2 138.9 L227.4 140.2 L228.6 141.4 L228.0 142.9 L228.0 144.7 L227.0 146.1 L227.0 147.8 L226.2 149.3 L226.2 151.0 L224.8 151.9 L224.0 153.5 L222.4 154.4 L221.4 155.7 L219.7 155.8 L218.3 156.8 L216.7 157.0 L215.0 157.1 L213.6 158.0 L211.9 158.1 L210.7 159.3 L210.1 161.0 L208.8 162.2 L208.3 163.9 L207.1 165.2" stroke="#ffffff" stroke-opacity="0.7" stroke-width="2"/><path d="M221.4 155.7 L222.9 156.3 L224.2 157.2 L225.9 157.3 L227.4 157.9 L228.8 158.7 L230.4 159.2 L232.0 159.6 L233.3 160.5 L235.0 161.1 L236.6 161.8 L237.9 163.2 L239.6 163.8 L241.2 164.7 L242.9 165.2 L243.9 166.7 L244.2 168.5 L245.2 170.0 L246.8 169.5 L248.4 169.6 L250.0 169.5 L251.6 169.1 L253.2 169.3 L254.8 168.8 L256.2 167.6 L257.6 166.5 L259.1 165.5 L260.0 163.8 L261.8 163.2 L263.0 161.8 L264.3 160.5 L265.7 159.2 L267.3 158.3 L268.4 156.8 L270.2 156.0 L271.4 154.5 L273.0 155.0 L274.6 155.2 L276.2 155.7" stroke="#ffffff" stroke-opacity="0.7" stroke-width="2"/><path d="M276.2 134.3 L275.7 136.2 L275.8 138.1 L275.7 140.0 L275.0 141.9 L275.0 143.8 L275.1 145.7 L274.3 147.6 L274.5 149.5 L273.9 151.4 L273.8 153.3 L274.4 155.0 L275.7 156.2 L276.6 157.7 L277.8 159.0 L278.6 160.5 L279.6 162.1 L280.2 163.9 L280.7 165.7 L281.0 167.6 L281.6 169.3 L282.4 171.0 L283.0 172.7 L283.4 174.5 L284.6 176.0 L285.2 177.7 L285.7 179.5 L286.8 180.8 L288.3 181.6 L289.5 182.8 L290.5 184.2 L291.9 185.2 L292.9 186.5 L294.2 187.7 L295.2 189.0 L296.7 189.5 L298.3 190.0 L299.9 190.2 L301.4 191.0 L303.0 191.4" stroke="#ffffff" stroke-opacity="0.7" stroke-width="2"/><path d="M254.8 168.8 L255.0 170.6 L255.5 172.3 L255.0 174.2 L255.7 175.9 L256.0 177.7 L255.9 179.5 L255.2 181.1 L253.9 182.3 L252.8 183.7 L252.0 185.1 L251.2 186.7 L251.6 188.5 L252.0 190.2 L252.5 192.0 L252.4 193.8 L253.3 195.2 L254.4 196.5 L255.5 197.8 L256.4 199.3 L257.5 200.6 L258.2 202.2 L259.5 203.3 L259.0 205.0 L259.0 206.7 L258.2 208.3 L258.5 210.2 L257.8 211.8 L257.5 213.5 L257.1 215.2 L257.0 218.0" stroke="#ffffff" stroke-opacity="0.7" stroke-width="2"/><path d="M219.0 184.3 L220.7 184.0 L222.4 183.8 L224.2 184.3 L225.8 183.6 L227.6 184.0 L229.3 184.2 L231.0 183.8 L232.7 184.0 L234.2 184.5 L235.7 185.3 L237.3 185.7 L238.9 186.3 L240.5 186.7 L241.5 188.1 L243.0 188.9 L244.1 190.1 L245.2 191.4 L247.2 191.2 L249.2 191.0 L251.2 191.4" stroke="#ffffff" stroke-opacity="0.7" stroke-width="2"/><path d="M219.0 184.3 L218.5 186.0 L218.5 187.7 L218.4 189.4 L218.8 191.1 L217.9 192.8 L217.9 194.5 L217.9 196.2 L218.2 198.0 L218.3 199.8 L218.8 201.5 L219.0 203.3 L218.0 204.6 L216.9 205.8 L215.6 206.8 L214.5 208.0 L213.2 209.0 L211.9 210.0 L211.7 211.6 L211.7 213.2 L211.6 214.8 L211.7 216.4 L211.9 218.0" stroke="#ffffff" stroke-opacity="0.7" stroke-width="2"/><path d="M303.0 191.4 L301.5 192.0 L299.8 192.2 L298.3 192.8 L296.6 192.9 L295.1 193.6 L293.6 194.2 L292.0 194.3 L290.3 194.5 L288.9 195.5 L287.2 195.5 L285.7 196.2 L285.3 198.0 L284.3 199.5 L283.5 201.0 L282.4 202.4 L281.5 204.0 L281.0 205.7 L281.1 207.5 L281.7 209.3 L281.5 211.1 L282.1 212.9" stroke="#ffffff" stroke-opacity="0.7" stroke-width="2"/><path d="M6.7 54.0 L6.0 55.7 L5.3 57.5 L4.1 58.9 L3.7 60.8 L2.5 62.3 L1.7 64.0 L2.5 66.5 L4.0 67.2 L5.5 67.8 L6.7 69.0 L8.3 70.7 L10.0 72.3 L10.2 74.0 L9.7 75.7 L9.8 77.4 L9.2 79.0 L8.7 81.1 L7.5 83.0 L9.2 85.0 L9.5 86.8 L9.3 88.7 L10.1 90.4 L10.0 92.3 L10.9 93.9 L11.2 95.7 L11.6 97.5 L12.6 99.0 L13.3 100.7 L14.6 102.3 L15.8 104.0 L16.2 105.9 L17.8 107.2 L18.3 109.0 L17.8 110.6 L18.2 112.3 L18.1 114.0 L18.0 115.7 L17.5 117.3 L16.1 118.1 L14.4 118.4 L13.1 119.6 L11.5 120.0 L10.0 120.7 L8.3 121.4 L6.7 122.3 L5.0 123.0 L3.7 124.0 L2.7 125.3 L1.5 126.3 L0.0 127.0" stroke="#8e8e8e" stroke-width="1.0"/><path d="M9.2 85.0 L11.0 84.1 L13.1 83.8 L15.0 83.0 L16.3 81.7 L17.6 80.3 L19.1 79.2 L20.3 77.8 L21.7 76.5 L23.3 76.1 L25.1 76.3 L26.7 75.9 L28.3 75.3 L30.0 75.4 L31.6 75.1 L33.3 74.8 L35.0 74.9 L36.7 74.5 L38.3 73.8 L40.0 73.7 L41.6 74.3 L43.4 73.7 L45.0 74.2 L46.6 74.7 L48.4 74.3 L50.0 74.8 L51.7 75.0 L53.4 74.9 L55.0 75.7 L56.7 76.0 L58.3 76.1 L60.0 76.6 L61.7 76.5 L63.4 77.2 L65.0 78.3 L66.7 79.0 L68.3 79.1 L70.0 79.1 L71.7 79.0 L73.3 79.0 L74.3 80.5 L75.5 81.8 L77.1 82.7 L78.3 84.0 L80.0 84.3 L81.7 83.9 L83.3 84.7 L85.0 84.8 L86.7 84.8 L88.5 84.8 L90.1 84.2 L91.6 83.3 L93.3 83.0 L95.0 82.2 L96.5 83.0 L97.7 84.1 L99.4 84.5 L100.6 85.7 L102.0 86.6 L103.7 85.9 L105.5 85.4 L107.2 84.9 L109.1 85.1 L110.8 84.1 L112.6 84.0 L114.1 85.1 L115.3 86.5 L116.3 88.1 L117.9 89.2 L119.6 88.5 L121.4 88.4 L123.2 88.2 L125.0 88.1 L126.7 87.4 L128.4 88.4 L130.1 89.1 L132.1 89.4 L133.8 90.2 L135.5 91.0 L136.9 92.7 L138.1 94.5 L138.4 92.8 L138.5 91.0 L137.8 89.2 L137.8 87.5 L137.9 85.8 L138.1 84.0 L138.5 82.4 L139.3 81.0 L140.1 79.5 L140.4 77.9 L140.8 76.3 L141.8 74.9 L142.5 73.4 L143.8 72.4 L145.2 71.6 L146.7 71.0 L147.8 69.8 L149.6 69.8 L151.3 69.4 L153.1 69.3 L154.9 69.1 L156.6 68.3 L158.4 68.9 L160.2 68.6 L161.9 68.1 L163.4 69.7 L165.4 70.7 L166.7 69.3 L167.4 67.5 L168.5 65.9 L169.3 64.2 L170.7 62.8 L172.5 62.9 L174.2 62.4 L176.0 62.4 L177.7 62.5 L179.5 62.5 L181.2 62.7 L183.0 62.8 L184.6 61.8 L186.4 61.2 L188.3 61.0 L190.1 60.9 L191.9 61.2 L193.6 61.6 L195.4 61.6 L197.0 62.6 L198.8 62.6 L200.6 62.8 L202.0 64.4 L203.1 66.2 L204.0 68.1 L204.7 69.6 L205.2 71.1 L205.9 72.6 L205.9 74.4 L206.7 75.8 L207.1 77.7 L208.4 79.2 L209.2 80.9 L207.8 81.7 L206.6 82.9 L205.0 83.4 L205.7 85.2 L205.8 87.1 L206.2 88.9 L206.1 90.9 L206.7 92.7 L208.5 93.3 L210.2 94.0 L211.5 95.5 L213.4 96.0 L215.1 96.6 L216.9 96.8 L218.4 97.7 L220.3 97.9 L221.8 98.9 L223.5 99.4 L224.2 100.9 L225.3 102.1 L226.5 103.3 L227.7 104.4 L228.3 106.0 L228.5 107.7 L229.0 109.4 L228.8 111.2 L229.4 112.8 L230.0 114.5 L230.4 116.2 L231.4 117.8 L231.9 119.5 L233.6 119.6 L235.3 120.4 L237.0 120.4 L238.5 121.4 L240.2 121.9 L241.9 122.5 L243.7 122.9 L245.4 122.8 L247.1 122.3 L248.7 121.4 L250.4 121.2 L252.1 120.9 L253.8 120.4 L255.4 119.8 L257.1 119.5 L258.8 119.4 L260.5 119.1 L262.2 119.2 L263.9 118.7 L264.7 120.4 L266.1 121.5 L267.2 122.9 L268.2 124.5 L269.5 125.9 L270.9 127.1 L272.6 128.1 L273.8 129.5 L275.7 129.5 L277.6 129.7 L279.5 129.9 L281.4 130.2 L283.3 130.7 L284.7 131.5 L286.0 132.5 L287.5 133.1 L289.1 133.6 L290.5 134.3 L292.2 135.0 L294.0 135.8 L295.9 135.7 L297.6 136.7 L299.5 136.0 L301.3 135.4 L303.0 134.3" stroke="#8e8e8e" stroke-width="1.0"/><path d="M81.4 174.3 L83.0 174.9 L84.6 175.2 L86.3 175.3 L87.9 175.7 L89.5 176.5 L90.6 178.1 L92.3 178.8 L93.6 180.0 L94.9 181.4 L96.2 182.7 L97.9 183.6 L99.7 183.9 L101.5 184.2 L103.1 185.0 L105.0 185.0 L107.1 186.2 L109.3 187.1 L110.9 188.3 L112.1 190.0 L112.4 191.8 L112.4 193.6 L111.7 195.3 L112.1 197.1 L112.6 198.7 L113.8 199.9 L114.0 201.6 L115.0 202.9 L115.6 204.5 L116.8 205.8 L117.9 207.1 L118.7 208.5 L119.3 210.0 L120.3 211.3 L120.7 212.9 L121.8 214.9 L122.1 217.1 L123.0 220.0" stroke="#8e8e8e" stroke-width="1.0"/><path d="M48.3 74.8 L47.3 76.3 L46.9 78.1 L46.4 79.8 L45.8 81.5 L45.5 83.4 L45.9 85.4 L45.8 87.3 L46.8 88.8 L48.0 90.2 L49.5 91.2 L50.7 92.5 L51.7 94.0 L52.7 95.6 L53.5 97.3 L54.1 99.1 L55.0 100.7 L54.8 102.4 L54.2 104.0 L54.0 105.7 L53.3 107.3 L51.9 108.5 L51.2 110.2 L50.0 111.5 L48.3 111.8 L46.7 112.0 L45.0 112.1 L43.4 112.8 L41.7 113.0 L39.8 114.1 L38.3 115.7 L38.1 117.5 L37.9 119.3 L37.7 121.2 L37.5 123.0" stroke="#a4a4a4" stroke-width="0.7"/><path d="M16.7 109.0 L18.1 110.1 L18.9 111.6 L20.0 113.0 L21.8 113.7 L23.5 114.4 L24.9 115.8 L26.7 116.5 L28.5 117.3 L30.0 118.6 L31.6 119.8 L33.3 120.7 L34.9 121.5 L36.7 122.1 L38.3 123.0" stroke="#a4a4a4" stroke-width="0.7"/><path d="M73.3 55.7 L74.6 57.0 L75.9 58.4 L77.2 59.8 L78.9 60.8 L80.0 62.3 L80.8 64.0 L81.8 65.5 L82.5 67.3 L82.5 69.0 L82.0 70.6 L82.0 72.3 L81.8 74.0 L81.7 75.7 L81.7 77.4 L81.7 79.1 L82.2 80.7 L82.3 82.3 L82.5 84.0 L82.3 85.7 L82.1 87.3 L81.7 89.0 L81.7 90.7 L80.9 92.4 L80.0 94.0 L79.2 95.7 L78.3 97.3 L77.7 98.9 L77.6 100.6 L77.2 102.3 L76.9 103.9 L77.2 105.7 L76.7 107.3 L76.4 109.0 L75.9 110.6 L75.8 112.3 L75.8 114.0 L74.5 115.1 L73.0 115.9 L71.5 116.5 L70.0 117.3 L68.9 118.6 L67.4 119.5 L66.2 120.6 L64.6 121.2 L63.3 122.3" stroke="#a4a4a4" stroke-width="0.7"/><path d="M75.8 114.0 L76.2 115.8 L76.8 117.5 L77.9 118.9 L78.3 120.7" stroke="#a4a4a4" stroke-width="0.7"/><path d="M73.3 55.7 L74.9 56.2 L76.6 56.4 L78.4 56.3 L79.9 57.2 L81.6 57.5 L83.4 57.2 L85.0 58.1 L86.7 58.0 L88.3 57.5 L90.0 57.2 L91.7 57.3 L93.3 56.5 L94.9 57.0 L96.7 56.6 L98.3 57.0 L100.0 57.3" stroke="#a4a4a4" stroke-width="0.7"/><path d="M156.6 55.8 L157.0 57.6 L157.6 59.3 L158.2 61.0 L158.4 62.8 L159.7 64.5 L160.6 66.4 L161.9 68.1" stroke="#a4a4a4" stroke-width="0.7"/><path d="M190.0 62.8 L190.6 64.5 L190.4 66.3 L190.6 68.1 L191.2 69.8 L191.0 71.6 L190.0 73.0 L188.7 74.2 L187.6 75.6 L186.5 76.9 L186.6 78.7 L185.6 80.4 L185.5 82.1 L185.2 83.9 L185.6 85.7 L185.2 87.5 L184.8 89.2 L184.9 91.0 L184.0 92.7 L184.1 94.5 L183.9 96.3 L183.4 98.0 L183.0 99.8 L183.6 101.7 L184.5 103.4 L185.8 105.0 L186.5 106.8 L186.4 108.6 L185.5 110.3 L185.4 112.1 L185.0 113.8 L184.8 115.6 L183.3 116.3 L181.8 116.7 L180.1 116.6 L178.5 117.2 L177.0 117.9 L175.3 117.6 L173.8 118.2 L172.2 118.5 L170.7 119.1 L168.7 118.2 L167.3 116.5 L165.4 115.6 L163.6 115.7 L161.9 114.8 L160.1 114.9 L158.4 114.8 L156.6 114.3 L154.9 113.8 L153.1 113.9 L151.5 113.3 L149.9 112.7 L148.6 111.6 L146.9 111.1 L145.4 110.4 L143.9 109.6 L142.5 108.6 L141.5 107.2 L141.0 105.7 L140.5 104.1 L139.8 102.6 L139.5 100.9 L138.6 99.6 L138.1 98.0" stroke="#a4a4a4" stroke-width="0.7"/><path d="M184.8 115.6 L186.6 116.0 L188.4 116.1 L190.1 116.6 L191.9 116.7 L193.6 117.4 L195.2 116.9 L196.8 116.5 L198.5 116.8 L200.1 116.4 L201.7 115.9 L203.4 115.8 L205.0 115.6" stroke="#a4a4a4" stroke-width="0.7"/><path d="M114.4 91.9 L114.6 93.6 L115.7 95.1 L115.7 96.9 L116.5 98.4 L116.9 100.0 L117.1 101.7 L117.9 103.3 L118.0 105.1 L117.9 106.8 L117.7 108.6 L117.5 110.3 L117.9 112.1 L118.6 113.8 L118.8 115.7 L119.5 117.5 L120.1 119.2 L120.9 120.9 L121.4 122.7" stroke="#a4a4a4" stroke-width="0.7"/><path d="M165.4 115.6 L166.2 117.2 L167.2 118.8 L167.8 120.5 L168.6 122.2 L169.0 124.0" stroke="#a4a4a4" stroke-width="0.7"/><path d="M216.8 59.0 L217.5 60.8 L218.5 62.4 L220.1 61.7 L221.8 61.2 L223.5 60.6 L225.3 60.7 L227.0 60.3 L228.7 59.6 L230.3 59.0 L231.5 60.6 L232.7 62.2 L233.6 64.0 L235.2 63.3 L237.0 62.9 L238.6 62.1 L240.3 61.8 L242.0 61.1 L243.7 60.7 L244.8 62.0 L246.2 63.0 L247.7 63.8 L249.2 64.6 L250.4 65.8 L251.8 66.8 L253.5 66.9 L254.9 67.6 L256.6 68.0 L257.9 68.9 L259.4 69.6 L260.9 70.3 L262.5 70.7 L263.9 71.6 L265.6 72.1 L267.4 72.3 L269.0 73.0 L270.7 73.4 L272.3 74.2 L274.0 74.0 L275.6 73.5 L277.3 73.4 L279.0 73.4 L280.7 73.2 L282.4 73.3 L284.1 72.5 L285.7 71.7 L287.4 71.0 L289.0 70.0 L290.7 70.3 L292.4 70.5 L294.1 70.8 L295.8 70.6 L297.5 70.8 L299.3 70.1 L301.3 70.0 L303.0 69.1" stroke="#a4a4a4" stroke-width="0.7"/><path d="M218.5 62.4 L217.7 63.8 L216.2 64.8 L215.2 66.1 L214.5 67.7 L213.0 68.5 L211.9 69.8 L211.0 71.2 L210.0 72.5 L209.7 74.2 L209.4 75.8 L209.8 77.6 L209.3 79.2 L209.2 80.9" stroke="#a4a4a4" stroke-width="0.7"/><path d="M274.0 55.7 L274.8 57.4 L275.4 59.2 L276.3 60.8 L277.3 62.4 L275.9 63.5 L274.8 64.9 L273.3 65.9 L272.3 67.4 L272.2 69.1 L272.1 70.8 L272.5 72.5 L272.3 74.2" stroke="#a4a4a4" stroke-width="0.7"/><path d="M282.4 73.3 L283.1 75.1 L283.3 77.0 L283.5 78.9 L284.0 80.7 L284.0 82.6 L282.7 84.1 L281.8 85.9 L280.7 87.6 L281.0 89.3 L281.5 91.0 L281.8 92.7 L282.4 94.3 L283.4 95.6 L284.7 96.7 L285.2 98.5 L286.2 99.8 L287.4 101.0 L288.2 102.7 L289.1 104.4 L289.8 106.2 L290.8 107.8 L292.1 108.9 L292.6 110.6 L294.0 111.7 L295.1 113.0 L295.8 114.5 L296.7 116.1 L297.0 117.9 L298.1 119.5 L298.3 121.3 L299.2 122.9 L298.6 124.6 L298.8 126.4 L298.7 128.1 L298.4 129.8 L298.1 131.5 L297.8 133.2 L297.7 135.0 L297.6 136.7" stroke="#a4a4a4" stroke-width="0.7"/><path d="M227.7 104.4 L229.3 103.8 L230.7 102.7 L232.3 102.0 L233.9 101.4 L235.6 101.0 L237.1 100.0 L238.7 99.4 L240.4 99.2 L242.0 98.5 L243.7 98.3 L245.4 98.2 L247.1 98.3 L248.8 98.1 L250.4 97.7 L252.1 97.2 L253.7 96.2 L255.4 95.7 L257.1 95.0 L258.8 94.3 L260.5 93.5 L262.0 92.4 L264.0 92.1 L265.5 91.0 L267.2 90.6 L268.9 91.0 L270.6 90.8 L272.3 89.9 L274.0 90.1 L275.7 90.9 L277.2 92.0 L278.9 93.0 L280.7 93.4 L282.4 94.3" stroke="#a4a4a4" stroke-width="0.7"/><path d="M200.0 116.2 L201.5 116.9 L202.9 117.7 L204.0 119.0 L205.7 119.3 L207.0 120.4 L208.4 121.2 L210.1 122.2 L211.3 123.6 L212.6 125.1 L214.3 126.0" stroke="#a4a4a4" stroke-width="0.7"/><path d="M37.9 122.1 L38.5 124.2 L38.6 126.4 L39.3 128.0 L40.3 129.3 L41.0 130.8 L42.1 132.1 L41.1 133.5 L40.5 135.1 L39.2 136.3 L38.6 137.9 L37.2 139.0 L36.0 140.3 L34.6 141.4 L32.9 142.1 L31.2 142.6 L29.6 143.1 L27.9 143.6 L26.5 144.8 L25.0 145.7 L24.2 147.6 L22.9 149.3 L23.3 151.2 L23.5 153.1 L23.6 155.0 L21.9 154.9 L20.4 155.7 L18.7 155.3 L17.1 155.7 L15.2 155.7 L13.3 156.5 L11.4 156.4 L10.2 157.6 L9.4 159.2 L8.6 160.7 L8.5 162.6 L9.2 164.5 L9.3 166.4 L10.4 167.8 L11.4 169.3 L12.9 170.1 L14.1 171.4 L15.7 172.0" stroke="#a4a4a4" stroke-width="0.7"/><path d="M27.9 143.6 L30.0 145.0 L30.7 146.8 L31.6 148.5 L32.2 150.3 L32.9 152.1 L33.8 154.0 L34.6 155.8 L35.0 157.9 L36.4 159.1 L37.2 160.9 L38.6 162.1 L40.1 162.9 L41.3 164.3 L42.9 165.0 L44.4 166.3 L45.8 167.7 L47.1 169.3" stroke="#a4a4a4" stroke-width="0.7"/><path d="M0.0 165.7 L1.7 166.0 L3.5 166.0 L5.2 166.4 L6.8 167.2 L8.6 167.1 L9.9 168.2 L11.3 169.0 L12.8 169.8 L14.1 170.8 L15.7 171.4 L16.6 172.8 L18.0 173.7 L19.0 174.9 L20.5 175.7 L21.4 177.1 L22.3 178.7 L23.6 180.0 L24.5 181.6 L25.7 182.9 L26.6 184.4 L27.8 185.6 L28.6 187.1 L30.0 188.3 L30.5 190.2 L32.1 191.3 L32.9 192.9" stroke="#a4a4a4" stroke-width="0.7"/><path d="M0.0 184.3 L1.9 185.0 L3.8 185.6 L5.7 186.4 L7.7 187.0 L9.4 188.0 L11.4 188.6 L13.1 188.9 L14.7 188.2 L16.4 188.4 L18.1 188.0 L19.7 188.1 L21.4 187.9 L23.2 187.6 L25.0 187.2 L26.8 187.0 L28.6 187.1" stroke="#a4a4a4" stroke-width="0.7"/><path d="M5.7 186.4 L5.6 188.1 L4.7 189.6 L4.7 191.3 L4.3 192.9 L3.0 194.4 L1.2 195.4 L0.0 197.0" stroke="#a4a4a4" stroke-width="0.7"/><path d="M14.3 205.7 L15.9 205.2 L17.1 203.9 L18.4 202.9 L19.9 202.0 L21.4 201.4 L23.1 200.6 L25.0 200.2 L26.7 199.5 L28.6 199.3 L30.4 198.9 L32.1 198.8 L33.9 198.8 L35.7 198.6" stroke="#a4a4a4" stroke-width="0.7"/><path d="M33.6 194.3 L33.7 196.1 L34.2 197.8 L34.9 199.4 L35.3 201.2 L35.7 202.9 L36.1 204.8 L36.7 206.7 L37.1 208.6 L37.3 210.5 L37.6 212.3 L37.5 214.2 L37.0 216.1 L37.5 218.0" stroke="#a4a4a4" stroke-width="0.7"/><path d="M37.1 160.0 L38.7 161.2 L40.0 162.9 L41.4 164.3 L42.3 165.8 L43.1 167.3 L44.3 168.6 L46.1 170.0" stroke="#a4a4a4" stroke-width="0.7"/><path d="M54.3 160.0 L54.9 161.7 L55.2 163.5 L55.5 165.3 L55.7 167.1 L55.9 168.7 L55.9 170.4 L56.0 172.0" stroke="#a4a4a4" stroke-width="0.7"/><path d="M50.0 125.0 L51.8 125.0 L53.6 124.6 L55.4 124.2 L57.1 123.6 L57.2 125.5 L57.0 127.4 L56.4 129.3 L56.3 131.1 L56.3 132.9 L56.7 134.7 L56.7 136.5 L57.2 138.2 L57.0 140.0 L56.7 141.8 L57.1 143.6 L56.7 145.2 L56.6 146.8 L56.4 148.5 L56.9 150.1 L56.9 151.8 L56.8 153.4 L56.4 155.0 L56.6 156.8 L56.6 158.6 L56.6 160.4 L57.1 162.1 L56.9 163.8 L57.0 165.4 L57.1 167.1 L57.0 168.8 L57.4 170.4 L57.5 172.0" stroke="#a4a4a4" stroke-width="0.7"/><path d="M69.3 180.0 L70.1 181.4 L71.3 182.6 L71.7 184.4 L72.9 185.6 L73.6 187.1 L74.0 188.7 L74.9 190.1 L75.8 191.4 L76.4 192.9 L77.6 194.7 L78.5 196.6 L79.3 198.6 L80.3 200.1 L81.3 201.5 L82.8 202.7 L83.6 204.3 L84.8 205.5 L85.5 207.2 L86.4 208.6 L87.1 210.3 L88.0 212.0" stroke="#a4a4a4" stroke-width="0.7"/><path d="M55.0 190.0 L56.2 191.1 L57.4 192.1 L58.4 193.5 L59.8 194.3 L60.7 195.7 L61.8 197.5 L62.7 199.5 L63.6 201.4 L62.7 203.2 L62.5 205.2 L62.1 207.1 L61.4 208.7 L61.4 210.4 L61.0 212.0" stroke="#a4a4a4" stroke-width="0.7"/><path d="M63.6 201.4 L65.3 201.2 L67.0 201.2 L68.7 201.8 L70.4 201.6 L72.1 201.4 L74.2 200.6 L76.4 200.0" stroke="#a4a4a4" stroke-width="0.7"/><path d="M79.3 160.0 L79.8 161.6 L79.5 163.3 L79.5 165.0 L79.8 166.7 L80.1 168.3 L80.0 170.0" stroke="#a4a4a4" stroke-width="0.7"/><path d="M122.0 160.0 L122.6 161.5 L123.2 163.0 L124.4 164.2 L125.0 165.7" stroke="#a4a4a4" stroke-width="0.7"/><path d="M65.0 120.0 L66.2 118.7 L67.8 118.0 L69.3 117.1 L70.8 116.3 L72.0 115.0 L73.6 114.3 L75.0 113.0 L76.1 111.6 L77.1 110.0" stroke="#a4a4a4" stroke-width="0.7"/><path d="M73.6 114.3 L75.0 115.7 L76.6 117.0 L77.9 118.6 L78.6 120.2 L80.1 121.4 L80.8 123.0 L82.1 124.3 L82.8 126.1 L83.3 128.0 L83.6 130.0 L83.7 131.8 L84.5 133.5 L84.3 135.4 L85.0 137.1 L85.7 138.5 L86.4 140.0 L87.0 141.7 L87.4 143.5 L87.6 145.3 L87.9 147.1 L88.0 149.0 L88.0 151.0 L88.6 152.9 L87.5 154.2 L86.2 155.1 L85.0 156.2 L83.6 157.1 L81.9 158.3 L80.7 160.0 L80.8 161.7 L80.6 163.4 L80.3 165.0 L79.9 166.7 L79.2 168.3 L79.3 170.0" stroke="#a4a4a4" stroke-width="0.7"/><path d="M86.4 138.6 L88.2 138.5 L89.9 137.9 L91.7 137.7 L93.4 137.2 L95.0 136.4 L96.7 136.1 L98.3 135.9 L100.0 136.4 L101.7 136.1 L103.3 135.4 L105.0 135.7 L106.7 137.3 L108.6 138.6 L109.7 140.3 L110.7 142.1 L112.5 141.7 L114.3 141.3 L116.0 140.8 L117.9 140.7" stroke="#a4a4a4" stroke-width="0.7"/><path d="M117.9 110.0 L118.3 111.7 L118.1 113.4 L118.0 115.2 L117.5 116.9 L117.9 118.6 L119.0 119.9 L119.3 121.6 L120.7 122.8 L121.4 124.3 L121.4 126.0 L120.9 127.6 L120.8 129.3 L121.0 131.0 L121.2 132.7 L120.7 134.3 L120.0 135.9 L119.4 137.5 L118.3 139.0 L117.9 140.7 L118.7 142.2 L119.1 143.8 L119.3 145.5 L120.5 146.9 L120.7 148.6 L121.1 150.4 L121.2 152.2 L121.5 154.0 L122.1 155.7 L122.8 157.4 L123.1 159.1 L123.3 160.8 L123.0 162.6 L123.6 164.3 L123.8 166.2 L123.4 168.1 L123.6 170.0 L123.9 171.6 L124.9 173.0 L125.6 174.4 L126.0 176.0 L124.9 177.8 L124.3 179.9 L123.6 181.9" stroke="#a4a4a4" stroke-width="0.7"/><path d="M121.2 153.3 L122.9 152.8 L124.6 152.8 L126.3 152.2 L128.0 151.8 L129.6 151.3 L131.4 151.5 L133.1 151.0 L134.7 151.1 L136.3 150.6 L137.9 150.5 L139.4 149.6 L141.0 149.5 L142.6 149.4 L144.3 149.5 L145.9 149.2 L147.4 148.6" stroke="#a4a4a4" stroke-width="0.7"/><path d="M152.1 131.9 L153.6 131.0 L155.2 130.1 L156.8 129.5 L158.5 128.7 L160.2 128.3 L161.5 126.9 L163.3 126.6 L164.9 125.8 L166.4 124.8 L167.2 126.3 L168.3 127.6 L169.4 128.9 L170.6 130.1 L171.7 131.5 L172.7 132.9 L173.6 134.3 L174.0 135.9 L175.2 137.2 L175.8 138.8 L176.0 140.5 L177.0 141.8 L177.8 143.3 L178.5 144.8 L178.7 146.5 L179.5 147.9 L179.7 149.6 L180.7 151.0 L181.2 152.7 L182.0 154.3 L183.1 155.7 L184.6 156.4 L186.1 157.1 L187.6 157.9 L188.8 159.0 L190.2 160.0 L191.7 160.6 L193.2 161.3 L194.6 162.3 L195.9 163.3 L197.4 164.0 L197.9 165.6 L198.4 167.1 L198.9 168.6 L199.8 170.0 L201.3 169.1 L202.6 167.8 L204.3 167.3 L205.5 166.0 L207.1 165.2" stroke="#a4a4a4" stroke-width="0.7"/><path d="M126.0 176.0 L127.4 175.1 L128.6 174.1 L130.1 173.4 L131.2 172.1 L132.5 171.2 L133.8 170.2 L135.1 169.2 L136.8 168.8 L137.9 167.6 L139.5 167.3 L141.0 166.7 L142.6 166.3 L144.3 166.4 L145.8 165.6 L147.3 165.0 L149.0 165.0 L150.6 164.5 L152.1 164.0 L153.8 164.0 L155.2 162.9 L156.9 162.8 L158.5 162.7 L160.1 162.3 L161.7 162.0 L163.1 160.9 L164.8 160.7 L166.4 160.5 L167.9 159.8 L169.5 159.5 L171.3 159.7 L172.8 159.0 L174.5 158.8 L176.0 158.1 L177.5 157.2 L179.3 156.8 L180.7 155.7" stroke="#a4a4a4" stroke-width="0.7"/><path d="M192.6 165.2 L192.5 166.9 L192.6 168.6 L192.0 170.2 L191.8 171.9 L192.3 173.6 L191.8 175.2 L191.7 176.9 L191.9 178.6 L191.6 180.2 L191.4 181.9 L190.2 183.3 L188.8 184.4 L187.4 185.6 L185.8 186.6 L184.4 187.7 L183.1 189.0 L181.6 189.6 L180.0 190.2 L178.4 190.3 L176.7 190.5 L175.2 191.2 L173.6 191.4 L171.8 192.1 L170.1 192.8 L168.1 193.0 L166.4 193.8 L165.1 192.7 L163.5 192.0 L162.2 190.9 L161.1 189.6 L159.8 188.5 L158.5 187.4 L156.9 186.7 L155.7 185.6 L154.5 184.3 L152.8 184.0 L151.1 184.0 L149.4 184.0 L147.7 183.8 L146.0 183.1 L144.3 183.4 L142.6 183.1 L140.7 183.3 L138.8 183.7 L136.9 183.9 L135.0 183.8 L133.1 184.3 L131.6 183.5 L129.9 183.6 L128.3 183.3 L126.8 182.5 L125.1 182.5 L123.6 181.9 L121.8 182.4 L120.0 181.9 L118.2 182.4 L116.4 182.2 L114.7 182.7 L112.8 182.5 L111.1 183.0 L109.3 183.1 L106.4 184.3" stroke="#a4a4a4" stroke-width="0.7"/><path d="M133.1 184.3 L133.7 185.9 L134.2 187.6 L134.1 189.4 L134.4 191.1 L134.5 192.9 L135.5 194.4 L135.5 196.2 L136.6 197.5 L137.9 198.5 L139.0 199.8 L140.4 200.7 L141.5 202.0 L142.6 203.3 L142.9 205.0 L143.0 206.8 L143.9 208.3 L144.0 210.1 L144.1 211.8 L144.3 213.6 L145.0 215.2 L145.0 218.0" stroke="#a4a4a4" stroke-width="0.7"/><path d="M183.1 189.0 L183.7 190.7 L184.1 192.4 L183.8 194.2 L184.1 195.9 L184.8 197.6 L185.5 199.2 L185.5 201.0 L184.9 202.5 L185.1 204.2 L184.4 205.7 L184.3 207.3 L183.9 208.8 L184.2 210.5 L183.4 212.0 L183.6 213.7 L183.1 215.2 L183.0 218.0" stroke="#a4a4a4" stroke-width="0.7"/><path d="M185.5 201.0 L187.4 200.7 L189.3 200.8 L191.2 200.5 L193.1 199.8 L195.0 199.8 L196.8 199.7 L198.5 200.1 L200.2 200.3 L201.9 200.4 L203.7 200.4 L205.4 200.6 L207.1 201.0 L208.8 201.5 L210.4 202.0 L212.3 201.6 L213.9 202.4 L215.6 202.8 L217.4 202.6 L219.0 203.3" stroke="#a4a4a4" stroke-width="0.7"/><path d="M209.5 120.0 L210.5 121.7 L212.1 122.8 L213.0 124.5 L214.3 126.0 L215.9 125.6 L217.5 125.3 L219.0 124.6 L220.6 124.3 L222.3 124.1 L223.8 123.5 L225.5 123.3 L227.0 122.8 L228.6 122.4 L230.1 121.6 L231.6 120.5 L233.3 120.0" stroke="#a4a4a4" stroke-width="0.7"/><path d="M242.9 120.0 L244.4 120.7 L246.1 121.2 L247.7 121.6 L249.2 122.6 L250.7 123.2 L252.4 123.6 L254.0 123.0 L255.5 122.2 L257.1 121.8 L258.6 120.9 L260.2 120.3 L261.9 120.0" stroke="#a4a4a4" stroke-width="0.7"/><path d="M295.2 120.0 L295.9 121.6 L296.7 123.1 L297.0 124.7 L297.6 126.3 L298.5 127.8 L298.8 129.5 L298.4 131.3 L298.5 133.2 L297.7 134.9 L297.6 136.7" stroke="#a4a4a4" stroke-width="0.7"/><path d="M214.3 126.0 L215.6 127.4 L217.1 128.4 L218.8 129.3 L220.0 130.7 L221.4 131.9 L222.5 133.2 L223.2 134.8 L224.7 135.8 L225.3 137.5 L226.2 138.9 L227.4 140.2 L228.6 141.4 L228.0 142.9 L228.0 144.7 L227.0 146.1 L227.0 147.8 L226.2 149.3 L226.2 151.0 L224.8 151.9 L224.0 153.5 L222.4 154.4 L221.4 155.7 L219.7 155.8 L218.3 156.8 L216.7 157.0 L215.0 157.1 L213.6 158.0 L211.9 158.1 L210.7 159.3 L210.1 161.0 L208.8 162.2 L208.3 163.9 L207.1 165.2" stroke="#a4a4a4" stroke-width="0.7"/><path d="M221.4 155.7 L222.9 156.3 L224.2 157.2 L225.9 157.3 L227.4 157.9 L228.8 158.7 L230.4 159.2 L232.0 159.6 L233.3 160.5 L235.0 161.1 L236.6 161.8 L237.9 163.2 L239.6 163.8 L241.2 164.7 L242.9 165.2 L243.9 166.7 L244.2 168.5 L245.2 170.0 L246.8 169.5 L248.4 169.6 L250.0 169.5 L251.6 169.1 L253.2 169.3 L254.8 168.8 L256.2 167.6 L257.6 166.5 L259.1 165.5 L260.0 163.8 L261.8 163.2 L263.0 161.8 L264.3 160.5 L265.7 159.2 L267.3 158.3 L268.4 156.8 L270.2 156.0 L271.4 154.5 L273.0 155.0 L274.6 155.2 L276.2 155.7" stroke="#a4a4a4" stroke-width="0.7"/><path d="M276.2 134.3 L275.7 136.2 L275.8 138.1 L275.7 140.0 L275.0 141.9 L275.0 143.8 L275.1 145.7 L274.3 147.6 L274.5 149.5 L273.9 151.4 L273.8 153.3 L274.4 155.0 L275.7 156.2 L276.6 157.7 L277.8 159.0 L278.6 160.5 L279.6 162.1 L280.2 163.9 L280.7 165.7 L281.0 167.6 L281.6 169.3 L282.4 171.0 L283.0 172.7 L283.4 174.5 L284.6 176.0 L285.2 177.7 L285.7 179.5 L286.8 180.8 L288.3 181.6 L289.5 182.8 L290.5 184.2 L291.9 185.2 L292.9 186.5 L294.2 187.7 L295.2 189.0 L296.7 189.5 L298.3 190.0 L299.9 190.2 L301.4 191.0 L303.0 191.4" stroke="#a4a4a4" stroke-width="0.7"/><path d="M254.8 168.8 L255.0 170.6 L255.5 172.3 L255.0 174.2 L255.7 175.9 L256.0 177.7 L255.9 179.5 L255.2 181.1 L253.9 182.3 L252.8 183.7 L252.0 185.1 L251.2 186.7 L251.6 188.5 L252.0 190.2 L252.5 192.0 L252.4 193.8 L253.3 195.2 L254.4 196.5 L255.5 197.8 L256.4 199.3 L257.5 200.6 L258.2 202.2 L259.5 203.3 L259.0 205.0 L259.0 206.7 L258.2 208.3 L258.5 210.2 L257.8 211.8 L257.5 213.5 L257.1 215.2 L257.0 218.0" stroke="#a4a4a4" stroke-width="0.7"/><path d="M219.0 184.3 L220.7 184.0 L222.4 183.8 L224.2 184.3 L225.8 183.6 L227.6 184.0 L229.3 184.2 L231.0 183.8 L232.7 184.0 L234.2 184.5 L235.7 185.3 L237.3 185.7 L238.9 186.3 L240.5 186.7 L241.5 188.1 L243.0 188.9 L244.1 190.1 L245.2 191.4 L247.2 191.2 L249.2 191.0 L251.2 191.4" stroke="#a4a4a4" stroke-width="0.7"/><path d="M219.0 184.3 L218.5 186.0 L218.5 187.7 L218.4 189.4 L218.8 191.1 L217.9 192.8 L217.9 194.5 L217.9 196.2 L218.2 198.0 L218.3 199.8 L218.8 201.5 L219.0 203.3 L218.0 204.6 L216.9 205.8 L215.6 206.8 L214.5 208.0 L213.2 209.0 L211.9 210.0 L211.7 211.6 L211.7 213.2 L211.6 214.8 L211.7 216.4 L211.9 218.0" stroke="#a4a4a4" stroke-width="0.7"/><path d="M303.0 191.4 L301.5 192.0 L299.8 192.2 L298.3 192.8 L296.6 192.9 L295.1 193.6 L293.6 194.2 L292.0 194.3 L290.3 194.5 L288.9 195.5 L287.2 195.5 L285.7 196.2 L285.3 198.0 L284.3 199.5 L283.5 201.0 L282.4 202.4 L281.5 204.0 L281.0 205.7 L281.1 207.5 L281.7 209.3 L281.5 211.1 L282.1 212.9" stroke="#a4a4a4" stroke-width="0.7"/></g><path d="M33.5 194.5 L33.1 192.5 L33.1 190.5 L33.6 188.9 L34.9 187.7 L35.3 186.1 L36.6 184.4 L37.8 182.7 L38.8 180.8 L40.1 179.7 L41.4 178.8 L42.3 177.3 L44.0 176.6 L45.8 176.0 L46.1 174.1 L45.9 172.2 L45.7 170.3 L47.6 169.0 L49.3 169.7 L51.1 169.8 L52.5 170.7 L53.8 171.6 L56.4 171.2 L59.0 172.5 L61.2 172.9 L63.5 172.9 L65.3 172.1 L67.0 171.2 L68.7 170.8 L70.5 170.7 L72.3 170.6 L74.0 171.1 L75.8 171.2 L77.5 170.4 L79.3 170.3 L81.9 172.0 L81.9 174.7 L80.0 175.2 L78.4 176.4 L76.7 177.2 L74.9 177.3 L72.7 177.7 L70.5 177.3 L67.9 179.1 L66.8 180.5 L65.2 181.3 L63.5 181.8 L62.3 183.2 L60.8 183.9 L59.8 185.8 L58.2 187.4 L56.6 188.5 L54.6 188.8 L52.9 189.3 L51.1 188.9 L49.4 189.2 L47.6 189.4 L45.8 189.6 L44.1 190.1 L41.8 190.5 L39.7 191.4 L38.2 193.2 L36.2 194.5 L34.4 195.4Z" fill="#176f3c" stroke="#24503a" stroke-width="0.8"/></g></svg>
<div class="t" style="top:180.00px;font-size:8px;line-height:8px;color:#15301f;left:41.00px;transform:scaleX(0.9);transform-origin:left center;">1,903</div>
<div class="t" style="top:140.00px;font-size:11.6px;line-height:11.6px;color:#909090;left:147.80px;transform:scaleX(1.0);transform-origin:left center;-webkit-text-stroke:0.45px #909090;text-shadow:0 0 1px #f8f8f8;">Ukraine</div>
<div class="r" style="left:0.00px;top:208.80px;width:118.00px;height:10.00px;background:rgba(255,255,255,0.4);"></div>
<div class="t" style="top:210.00px;font-size:7.7px;line-height:7.7px;color:#6a6a6a;left:0.50px;transform:scaleX(0.98);transform-origin:left center;">© 2020 Mapbox © OpenStreetMap</div>
<div class="t" style="top:58.00px;font-size:8.1px;line-height:8.1px;color:#4a4a4a;left:309.00px;-webkit-text-stroke:0.25px #4a4a4a;">Категорія</div>
<div class="r" style="left:355.00px;top:54.00px;width:91.00px;height:13.00px;background:#fff;border:1px solid #c8c8c8;box-sizing:border-box;"></div>
<div class="t" style="top:57.00px;font-size:7.4px;line-height:7.4px;color:#4a4a4a;left:357.90px;">Індивідуальний зах...</div>
<svg style="left:434.5px;top:58.5px" width="6" height="4"><path d="M0.5 0.5 H5 L2.75 3.2Z" fill="#333"/></svg>
<div class="t" style="top:58.00px;font-size:8.1px;line-height:8.1px;color:#777;left:452.20px;">Забезпечення, днів:</div>
<div class="r" style="left:565.30px;top:57.00px;width:58.50px;height:22.00px;background:#fff;border:3px solid #e1202b;box-sizing:border-box;"></div>
<div class="t" style="top:59.00px;font-size:14.1px;line-height:14.1px;color:#858585;left:575.70px;">1,903</div>
<div class="t" style="top:91.00px;font-size:7px;line-height:7px;color:#555;left:312.70px;">Скорочена назва</div>
<svg style="left:376px;top:90px" width="8" height="8"><path d="M0 1.1 H6 M0 3.5 H3.7 M0 6.2 H2" stroke="#555" stroke-width="1.3"/></svg>
<div class="t" style="top:88.00px;font-size:6.8px;line-height:6.8px;color:#555;left:397.50px;">Забезпечення,</div>
<div class="t" style="top:96.00px;font-size:7.3px;line-height:7.3px;color:#555;left:397.50px;">днів (медіана)</div>
<div class="t" style="top:91.00px;font-size:7.5px;line-height:7.5px;color:#555;right:124.70px;text-align:right;">залишки</div>
<div class="t" style="top:91.00px;font-size:7.2px;line-height:7.2px;color:#555;right:69.10px;text-align:right;">потреба</div>
<div class="t" style="top:86.00px;font-size:7.2px;line-height:7.2px;color:#555;right:13.60px;text-align:right;">Забезпечення</div>
<div class="t" style="top:96.00px;font-size:7.5px;line-height:7.5px;color:#555;right:13.60px;text-align:right;">на тиждень</div>
<div class="r" style="left:308.60px;top:105.80px;width:305.10px;height:1.00px;background:#dedede;"></div>
<div class="r" style="left:308.60px;top:119.00px;width:305.10px;height:12.60px;background:#f4f4f4;"></div>
<div class="r" style="left:308.60px;top:144.20px;width:305.10px;height:12.60px;background:#f4f4f4;"></div>
<div class="r" style="left:308.60px;top:169.40px;width:305.10px;height:12.60px;background:#f4f4f4;"></div>
<div class="r" style="left:308.60px;top:194.60px;width:305.10px;height:12.60px;background:#f4f4f4;"></div>
<div class="t" style="top:110.00px;font-size:8.1px;line-height:8.1px;color:#333;left:312.50px;">Антисептик</div>
<div class="t" style="top:109.00px;font-size:8.6px;line-height:8.6px;color:#555;right:179.50px;text-align:right;transform:scaleX(0.94);transform-origin:right center;">89</div>
<div class="t" style="top:109.00px;font-size:8.6px;line-height:8.6px;color:#555;right:124.70px;text-align:right;transform:scaleX(0.94);transform-origin:right center;">89</div>
<div class="t" style="top:109.00px;font-size:8.6px;line-height:8.6px;color:#555;right:69.80px;text-align:right;transform:scaleX(0.94);transform-origin:right center;">1</div>
<div class="t" style="top:109.00px;font-size:8.6px;line-height:8.6px;color:#555;right:13.70px;text-align:right;transform:scaleX(0.94);transform-origin:right center;">100,00%</div>
<div class="t" style="top:123.00px;font-size:8.1px;line-height:8.1px;color:#333;left:312.50px;">Рукавички оглядові</div>
<div class="t" style="top:122.00px;font-size:8.6px;line-height:8.6px;color:#555;right:179.50px;text-align:right;transform:scaleX(0.94);transform-origin:right center;">56</div>
<div class="t" style="top:122.00px;font-size:8.6px;line-height:8.6px;color:#555;right:124.70px;text-align:right;transform:scaleX(0.94);transform-origin:right center;">7 600</div>
<div class="t" style="top:122.00px;font-size:8.6px;line-height:8.6px;color:#555;right:69.80px;text-align:right;transform:scaleX(0.94);transform-origin:right center;">136</div>
<div class="t" style="top:122.00px;font-size:8.6px;line-height:8.6px;color:#555;right:13.70px;text-align:right;transform:scaleX(0.94);transform-origin:right center;">100,00%</div>
<div class="t" style="top:135.00px;font-size:8.1px;line-height:8.1px;color:#333;left:312.50px;">Костюм біозахисту</div>
<div class="t" style="top:134.00px;font-size:8.6px;line-height:8.6px;color:#555;right:179.50px;text-align:right;transform:scaleX(0.94);transform-origin:right center;">7</div>
<div class="t" style="top:134.00px;font-size:8.6px;line-height:8.6px;color:#555;right:124.70px;text-align:right;transform:scaleX(0.94);transform-origin:right center;">384</div>
<div class="t" style="top:134.00px;font-size:8.6px;line-height:8.6px;color:#555;right:69.80px;text-align:right;transform:scaleX(0.94);transform-origin:right center;">55</div>
<div class="t" style="top:134.00px;font-size:8.6px;line-height:8.6px;color:#555;right:13.70px;text-align:right;transform:scaleX(0.94);transform-origin:right center;">100,00%</div>
<div class="t" style="top:148.00px;font-size:8.1px;line-height:8.1px;color:#333;left:312.50px;">Респіратор</div>
<div class="t" style="top:147.00px;font-size:8.6px;line-height:8.6px;color:#555;right:179.50px;text-align:right;transform:scaleX(0.94);transform-origin:right center;">3</div>
<div class="t" style="top:147.00px;font-size:8.6px;line-height:8.6px;color:#555;right:124.70px;text-align:right;transform:scaleX(0.94);transform-origin:right center;">112</div>
<div class="t" style="top:147.00px;font-size:8.6px;line-height:8.6px;color:#555;right:69.80px;text-align:right;transform:scaleX(0.94);transform-origin:right center;">36</div>
<div class="t" style="top:147.00px;font-size:8.6px;line-height:8.6px;color:#555;right:13.70px;text-align:right;transform:scaleX(0.94);transform-origin:right center;">44,14%</div>
<div class="t" style="top:160.00px;font-size:8.1px;line-height:8.1px;color:#333;left:312.50px;">Захист очей багатор..</div>
<div class="t" style="top:159.00px;font-size:8.6px;line-height:8.6px;color:#555;right:179.50px;text-align:right;transform:scaleX(0.94);transform-origin:right center;">2</div>
<div class="t" style="top:159.00px;font-size:8.6px;line-height:8.6px;color:#555;right:124.70px;text-align:right;transform:scaleX(0.94);transform-origin:right center;">69</div>
<div class="t" style="top:159.00px;font-size:8.6px;line-height:8.6px;color:#555;right:69.80px;text-align:right;transform:scaleX(0.94);transform-origin:right center;">36</div>
<div class="t" style="top:159.00px;font-size:8.6px;line-height:8.6px;color:#555;right:13.70px;text-align:right;transform:scaleX(0.94);transform-origin:right center;">27,19%</div>
<div class="t" style="top:173.00px;font-size:8.1px;line-height:8.1px;color:#333;left:312.50px;">Маски одноразові</div>
<div class="t" style="top:172.00px;font-size:8.6px;line-height:8.6px;color:#555;right:179.50px;text-align:right;transform:scaleX(0.94);transform-origin:right center;">1</div>
<div class="t" style="top:172.00px;font-size:8.6px;line-height:8.6px;color:#555;right:124.70px;text-align:right;transform:scaleX(0.94);transform-origin:right center;">100</div>
<div class="t" style="top:172.00px;font-size:8.6px;line-height:8.6px;color:#555;right:69.80px;text-align:right;transform:scaleX(0.94);transform-origin:right center;">145</div>
<div class="t" style="top:172.00px;font-size:8.6px;line-height:8.6px;color:#555;right:13.70px;text-align:right;transform:scaleX(0.94);transform-origin:right center;">9,84%</div>
<div class="t" style="top:186.00px;font-size:8.1px;line-height:8.1px;color:#333;left:312.50px;">Халати ізоляційні о..</div>
<div class="t" style="top:185.00px;font-size:8.6px;line-height:8.6px;color:#555;right:179.50px;text-align:right;transform:scaleX(0.94);transform-origin:right center;">0</div>
<div class="t" style="top:185.00px;font-size:8.6px;line-height:8.6px;color:#555;right:124.70px;text-align:right;transform:scaleX(0.94);transform-origin:right center;">0</div>
<div class="t" style="top:185.00px;font-size:8.6px;line-height:8.6px;color:#555;right:69.80px;text-align:right;transform:scaleX(0.94);transform-origin:right center;">55</div>
<div class="t" style="top:185.00px;font-size:8.6px;line-height:8.6px;color:#555;right:13.70px;text-align:right;transform:scaleX(0.94);transform-origin:right center;">0,00%</div>
<div class="t" style="top:198.00px;font-size:8.1px;line-height:8.1px;color:#333;left:312.50px;">Маски багаторазові</div>
<div class="t" style="top:197.00px;font-size:8.6px;line-height:8.6px;color:#555;right:179.50px;text-align:right;transform:scaleX(0.94);transform-origin:right center;">0</div>
<div class="t" style="top:197.00px;font-size:8.6px;line-height:8.6px;color:#555;right:124.70px;text-align:right;transform:scaleX(0.94);transform-origin:right center;">0</div>
<div class="t" style="top:197.00px;font-size:8.6px;line-height:8.6px;color:#555;right:69.80px;text-align:right;transform:scaleX(0.94);transform-origin:right center;">118</div>
<div class="t" style="top:197.00px;font-size:8.6px;line-height:8.6px;color:#555;right:13.70px;text-align:right;transform:scaleX(0.94);transform-origin:right center;">0,00%</div>
<div class="t" style="top:211.00px;font-size:8.1px;line-height:8.1px;color:#333;left:312.50px;">Захист очей однора..</div>
<div class="t" style="top:210.00px;font-size:8.6px;line-height:8.6px;color:#555;right:179.50px;text-align:right;transform:scaleX(0.94);transform-origin:right center;">0</div>
<div class="t" style="top:210.00px;font-size:8.6px;line-height:8.6px;color:#555;right:124.70px;text-align:right;transform:scaleX(0.94);transform-origin:right center;">0</div>
<div class="t" style="top:210.00px;font-size:8.6px;line-height:8.6px;color:#555;right:69.80px;text-align:right;transform:scaleX(0.94);transform-origin:right center;">36</div>
<div class="t" style="top:210.00px;font-size:8.6px;line-height:8.6px;color:#555;right:13.70px;text-align:right;transform:scaleX(0.94);transform-origin:right center;">0,00%</div>
<div class="r" style="left:308.60px;top:219.00px;width:305.10px;height:1.00px;background:#d6d6d6;"></div>
<div class="r" style="left:426.00px;top:101.00px;width:44.90px;height:122.80px;border:3px solid #e1202b;box-sizing:border-box;"></div>
<div class="t" style="top:235.00px;font-size:7.6px;line-height:7.6px;color:#3a3a3a;right:541.80px;text-align:right;-webkit-text-stroke:0.35px #3a3a3a;">Область</div>
<div class="t" style="top:248.00px;font-size:7.9px;line-height:7.9px;color:#5a5a5a;right:541.80px;text-align:right;">Чернівецька область</div>
<div class="r" style="left:87.20px;top:245.20px;width:205.40px;height:9.40px;background:#0a7a3c;"></div>
<div class="r" style="left:87.20px;top:255.20px;width:212.80px;height:1.00px;background:#eef6f6;"></div>
<div class="t" style="top:263.00px;font-size:8.7px;line-height:8.7px;color:#8a8a8a;left:88.30px;transform:scaleX(0.92);transform-origin:left center;">0,0</div>
<div class="t" style="top:263.00px;font-size:8.7px;line-height:8.7px;color:#8a8a8a;left:-8.80px;width:300px;text-align:center;transform:scaleX(0.92);transform-origin:center center;">0,5</div>
<div class="t" style="top:263.00px;font-size:8.7px;line-height:8.7px;color:#8a8a8a;left:45.90px;width:300px;text-align:center;transform:scaleX(0.92);transform-origin:center center;">1,0</div>
<div class="t" style="top:263.00px;font-size:8.7px;line-height:8.7px;color:#8a8a8a;left:99.20px;width:300px;text-align:center;transform:scaleX(0.92);transform-origin:center center;">1,5</div>
<div class="t" style="top:280.00px;font-size:7.9px;line-height:7.9px;color:#555;left:168.90px;">Забезпечення</div>
<div class="t" style="top:241.00px;font-size:8.1px;line-height:8.1px;color:#3a3a3a;left:358.80px;-webkit-text-stroke:0.35px #3a3a3a;">Лікарня</div>
<svg style="left:390.7px;top:240px" width="8" height="8"><path d="M0 1 H6 M0 3.5 H4 M0 6 H2.2" stroke="#555" stroke-width="1.4"/></svg>
<div class="r" style="left:438.90px;top:249.00px;width:1.00px;height:128.60px;background:#efefef;"></div>
<div class="r" style="left:467.60px;top:249.00px;width:1.00px;height:128.60px;background:#efefef;"></div>
<div class="r" style="left:496.30px;top:249.00px;width:1.00px;height:128.60px;background:#efefef;"></div>
<div class="r" style="left:525.00px;top:249.00px;width:1.00px;height:128.60px;background:#efefef;"></div>
<div class="r" style="left:553.70px;top:249.00px;width:1.00px;height:128.60px;background:#efefef;"></div>
<div class="r" style="left:582.40px;top:249.00px;width:1.00px;height:128.60px;background:#efefef;"></div>
<div class="r" style="left:611.10px;top:249.00px;width:1.00px;height:128.60px;background:#efefef;"></div>
<div class="r" style="left:410.70px;top:377.10px;width:203.30px;height:0.80px;background:#efefef;"></div>
<div class="r" style="left:308.10px;top:338.60px;width:102.30px;height:12.10px;background:#72c0d5;"></div>
<div class="r" style="left:410.80px;top:251.20px;width:193.70px;height:9.00px;background:#c6ddd3;"></div>
<div class="t" style="top:253.00px;font-size:7.9px;line-height:7.9px;color:#555;right:217.50px;text-align:right;transform:scaleX(1.024);transform-origin:right center;">О ЧОДКЛ | 43291042</div>
<div class="r" style="left:410.80px;top:263.98px;width:93.90px;height:9.00px;background:#f7e2cf;"></div>
<div class="t" style="top:266.00px;font-size:7.9px;line-height:7.9px;color:#555;right:217.50px;text-align:right;transform:scaleX(1.027);transform-origin:right center;">Сторожинецька централ..</div>
<div class="r" style="left:410.80px;top:276.76px;width:71.40px;height:9.00px;background:#f7d9d3;"></div>
<div class="t" style="top:279.00px;font-size:7.9px;line-height:7.9px;color:#555;right:217.50px;text-align:right;transform:scaleX(1.019);transform-origin:right center;">Сокирянська центральна..</div>
<div class="r" style="left:410.80px;top:289.54px;width:56.90px;height:9.00px;background:#f6d5d5;"></div>
<div class="t" style="top:291.00px;font-size:7.9px;line-height:7.9px;color:#555;right:217.50px;text-align:right;transform:scaleX(1.038);transform-origin:right center;">Міська лікарня №1 | 011..</div>
<div class="r" style="left:410.80px;top:302.32px;width:46.60px;height:9.00px;background:#f5d3d6;"></div>
<div class="t" style="top:304.00px;font-size:7.9px;line-height:7.9px;color:#555;right:217.50px;text-align:right;transform:scaleX(1.022);transform-origin:right center;">Новоселицька центральн..</div>
<div class="r" style="left:410.80px;top:315.10px;width:46.00px;height:9.00px;background:#f5d3d6;"></div>
<div class="t" style="top:317.00px;font-size:7.9px;line-height:7.9px;color:#555;right:217.50px;text-align:right;transform:scaleX(1.016);transform-origin:right center;">Кельменецька ЦРЛ | 020..</div>
<div class="r" style="left:410.80px;top:327.88px;width:37.00px;height:9.00px;background:#f5d2d6;"></div>
<div class="t" style="top:330.00px;font-size:7.9px;line-height:7.9px;color:#555;right:217.50px;text-align:right;transform:scaleX(1.03);transform-origin:right center;">Кіцманська центральна р..</div>
<div class="r" style="left:410.80px;top:340.66px;width:27.00px;height:9.00px;background:#e0283a;"></div>
<div class="t" style="top:342.00px;font-size:7.9px;line-height:7.9px;color:#444;right:217.50px;text-align:right;transform:scaleX(1.03);transform-origin:right center;">Хотинська центральна ра..</div>
<div class="r" style="left:410.80px;top:353.44px;width:21.90px;height:9.00px;background:#f3cdd4;"></div>
<div class="t" style="top:355.00px;font-size:7.9px;line-height:7.9px;color:#555;right:217.50px;text-align:right;transform:scaleX(0.948);transform-origin:right center;">О ЧЕРНІВЕЦЬКА ОБЛАСН..</div>
<div class="r" style="left:410.80px;top:366.22px;width:19.30px;height:9.00px;background:#f3ccd3;"></div>
<div class="t" style="top:368.00px;font-size:7.9px;line-height:7.9px;color:#555;right:217.50px;text-align:right;transform:scaleX(1.007);transform-origin:right center;">Глибоцька центральна р..</div>
<div class="t" style="top:383.00px;font-size:8.7px;line-height:8.7px;color:#8a8a8a;left:263.20px;width:300px;text-align:center;transform:scaleX(0.92);transform-origin:center center;">0</div>
<div class="t" style="top:383.00px;font-size:8.7px;line-height:8.7px;color:#8a8a8a;left:289.40px;width:300px;text-align:center;transform:scaleX(0.92);transform-origin:center center;">2</div>
<div class="t" style="top:383.00px;font-size:8.7px;line-height:8.7px;color:#8a8a8a;left:318.10px;width:300px;text-align:center;transform:scaleX(0.92);transform-origin:center center;">4</div>
<div class="t" style="top:383.00px;font-size:8.7px;line-height:8.7px;color:#8a8a8a;left:346.80px;width:300px;text-align:center;transform:scaleX(0.92);transform-origin:center center;">6</div>
<div class="t" style="top:383.00px;font-size:8.7px;line-height:8.7px;color:#8a8a8a;left:375.50px;width:300px;text-align:center;transform:scaleX(0.92);transform-origin:center center;">8</div>
<div class="t" style="top:383.00px;font-size:8.7px;line-height:8.7px;color:#8a8a8a;left:404.20px;width:300px;text-align:center;transform:scaleX(0.92);transform-origin:center center;">10</div>
<div class="t" style="top:383.00px;font-size:8.7px;line-height:8.7px;color:#8a8a8a;left:432.90px;width:300px;text-align:center;transform:scaleX(0.92);transform-origin:center center;">12</div>
<div class="t" style="top:383.00px;font-size:8.7px;line-height:8.7px;color:#8a8a8a;left:458.00px;width:300px;text-align:center;transform:scaleX(0.92);transform-origin:center center;">14</div>
<div class="t" style="top:400.00px;font-size:7.9px;line-height:7.9px;color:#555;left:485.70px;">Забезпечення</div>
</body></html>
